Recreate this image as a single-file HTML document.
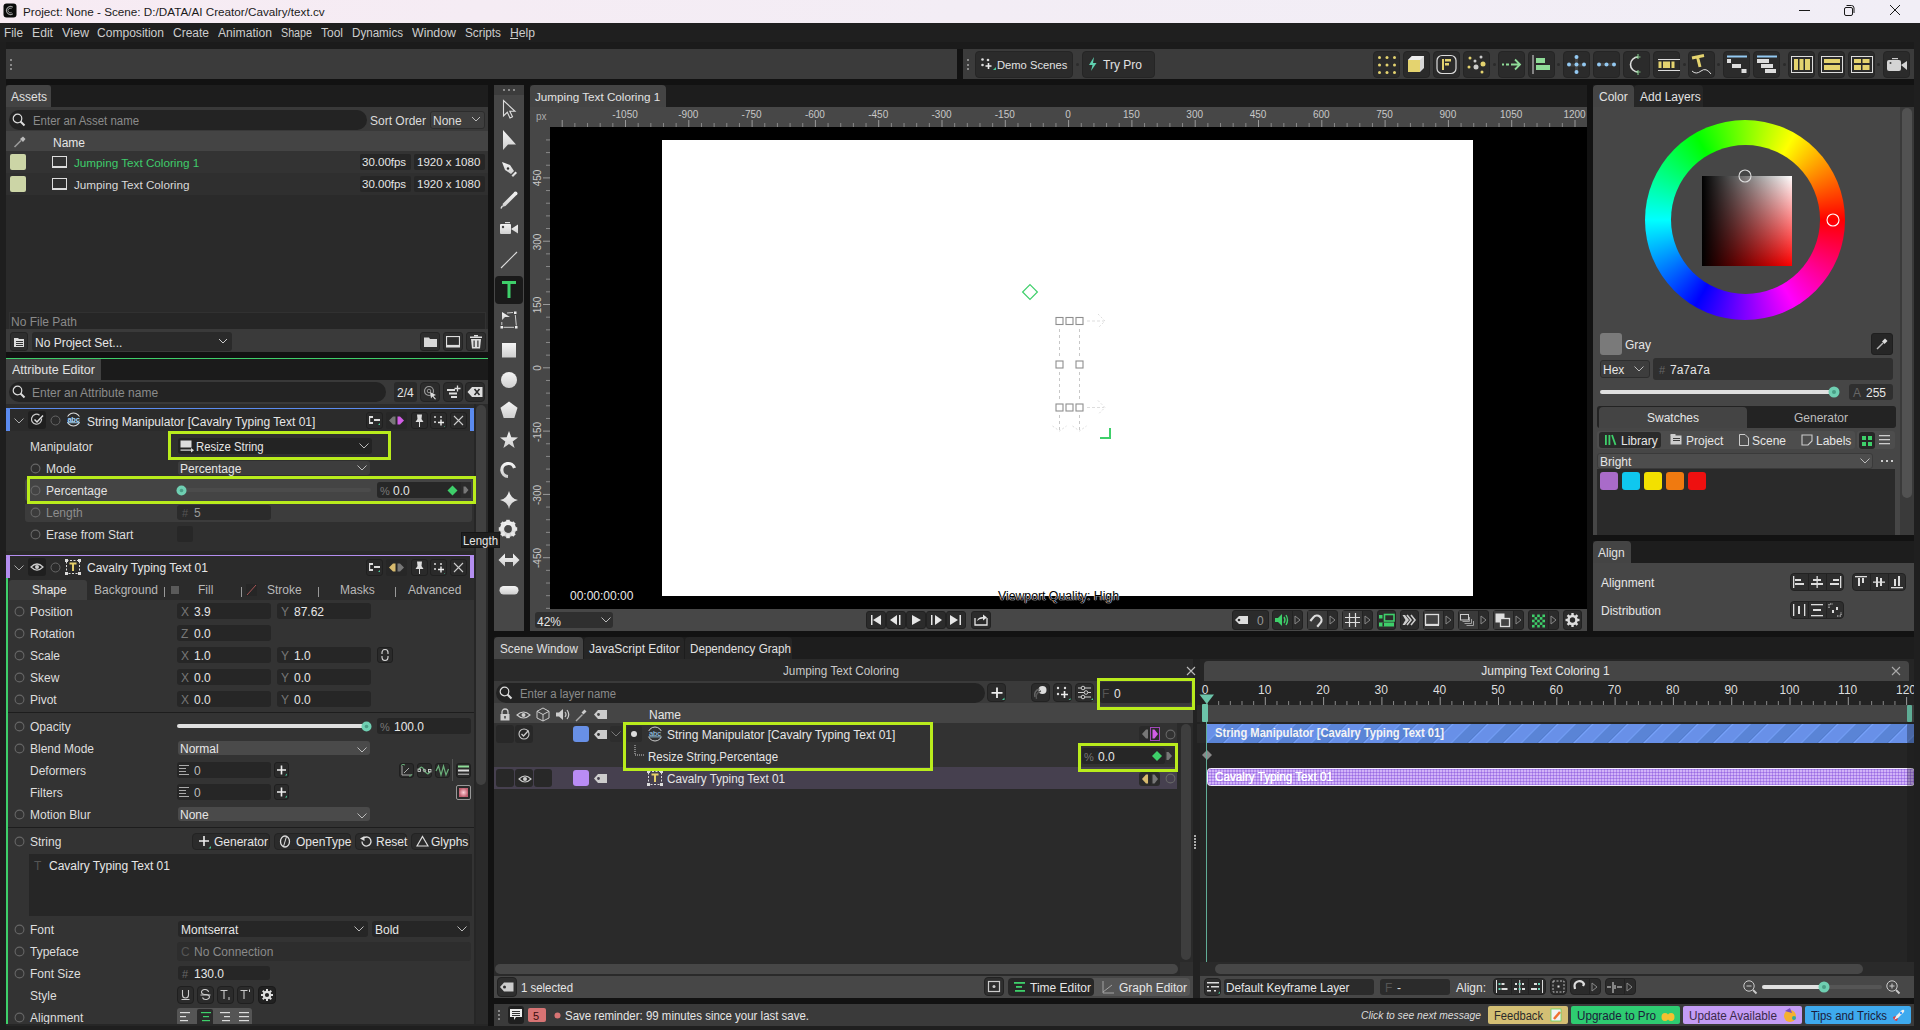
<!DOCTYPE html><html><head><meta charset="utf-8"><style>
*{box-sizing:border-box;margin:0;padding:0}
html,body{width:1920px;height:1030px;overflow:hidden;background:#121212;font-family:"Liberation Sans",sans-serif;font-size:12px;color:#dcdcdc}
.a{position:absolute}
.t{position:absolute;white-space:nowrap}
</style></head><body><div class="a" style="left:0px;top:0px;width:1920px;height:23px;background:linear-gradient(90deg,#f7ebf3 0%,#f3edf5 50%,#f1eef6 100%);"></div>
<svg class="a" style="left:3px;top:3px;" width="14" height="15" viewBox="0 0 14 15"><rect x="0.5" y="0.5" width="13" height="14" rx="3" fill="#0b0b0b"/><path d="M9.8 4.2 A4 4 0 1 0 9.8 10.8" fill="none" stroke="#9a9a9a" stroke-width="1.1"/><path d="M8.6 5.6 A2.3 2.3 0 1 0 8.6 9.4" fill="none" stroke="#9a9a9a" stroke-width="0.9"/></svg>
<div class="t" style="left:23px;top:5px;font-size:11.7px;line-height:13px;color:#1a1a1a;">Project: None - Scene: D:/DATA/AI Creator/Cavalry/text.cv</div>
<div class="a" style="left:1799px;top:10px;width:11px;height:1px;background:#1a1a1a;"></div>
<svg class="a" style="left:1843px;top:4px;" width="13" height="13" viewBox="0 0 13 13"><rect x="1.5" y="3.5" width="8" height="8" rx="1.5" fill="none" stroke="#1a1a1a" stroke-width="1"/><path d="M3.5 1.5 h5 a2.5 2.5 0 0 1 2.5 2.5 v5" fill="none" stroke="#1a1a1a" stroke-width="1"/></svg>
<svg class="a" style="left:1889px;top:4px;" width="12" height="12" viewBox="0 0 12 12"><path d="M1 1 L11 11 M11 1 L1 11" stroke="#1a1a1a" stroke-width="1"/></svg>
<div class="a" style="left:0px;top:23px;width:1920px;height:19px;background:#1f1f1f;"></div>
<div class="a" style="left:0px;top:42px;width:1920px;height:7px;background:#1b1b1b;"></div>
<div class="t" style="left:4px;top:26px;font-size:12px;line-height:14px;color:#cdcdcd;;transform:scaleX(0.9827);transform-origin:0 0">File</div>
<div class="t" style="left:32px;top:26px;font-size:12px;line-height:14px;color:#cdcdcd;;transform:scaleX(1.0156);transform-origin:0 0">Edit</div>
<div class="t" style="left:62px;top:26px;font-size:12px;line-height:14px;color:#cdcdcd;;transform:scaleX(1.0468);transform-origin:0 0">View</div>
<div class="t" style="left:97px;top:26px;font-size:12px;line-height:14px;color:#cdcdcd;;transform:scaleX(1.0046);transform-origin:0 0">Composition</div>
<div class="t" style="left:173px;top:26px;font-size:12px;line-height:14px;color:#cdcdcd;;transform:scaleX(0.9995);transform-origin:0 0">Create</div>
<div class="t" style="left:218px;top:26px;font-size:12px;line-height:14px;color:#cdcdcd;;transform:scaleX(1.0120);transform-origin:0 0">Animation</div>
<div class="t" style="left:281px;top:26px;font-size:12px;line-height:14px;color:#cdcdcd;;transform:scaleX(0.8934);transform-origin:0 0">Shape</div>
<div class="t" style="left:321px;top:26px;font-size:12px;line-height:14px;color:#cdcdcd;;transform:scaleX(0.9994);transform-origin:0 0">Tool</div>
<div class="t" style="left:352px;top:26px;font-size:12px;line-height:14px;color:#cdcdcd;;transform:scaleX(0.9682);transform-origin:0 0">Dynamics</div>
<div class="t" style="left:412px;top:26px;font-size:12px;line-height:14px;color:#cdcdcd;;transform:scaleX(1.0310);transform-origin:0 0">Window</div>
<div class="t" style="left:465px;top:26px;font-size:12px;line-height:14px;color:#cdcdcd;;transform:scaleX(0.9816);transform-origin:0 0">Scripts</div>
<div class="t" style="left:510px;top:26px;font-size:12px;line-height:14px;color:#cdcdcd;;transform:scaleX(1.0130);transform-origin:0 0">Help</div>
<div class="a" style="left:510px;top:38px;width:8px;height:1px;background:#cdcdcd;"></div>
<div class="a" style="left:6px;top:49px;width:951px;height:30px;background:#3b3b3b;"></div>
<div class="a" style="left:963px;top:49px;width:951px;height:30px;background:#3b3b3b;"></div>
<div class="a" style="left:10px;top:59px;width:2px;height:2px;background:#8a8a8a;"></div>
<div class="a" style="left:10px;top:63.5px;width:2px;height:2px;background:#8a8a8a;"></div>
<div class="a" style="left:10px;top:68px;width:2px;height:2px;background:#8a8a8a;"></div>
<div class="a" style="left:967px;top:59px;width:2px;height:2px;background:#8a8a8a;"></div>
<div class="a" style="left:967px;top:63.5px;width:2px;height:2px;background:#8a8a8a;"></div>
<div class="a" style="left:967px;top:68px;width:2px;height:2px;background:#8a8a8a;"></div>
<div class="a" style="left:975px;top:51px;width:98px;height:27px;background:#2b2b2b;border:1px solid #252525;border-radius:4px"></div>
<div class="a" style="left:1082px;top:51px;width:73px;height:27px;background:#2b2b2b;border:1px solid #252525;border-radius:4px"></div>
<div class="a" style="left:1076px;top:63px;width:3px;height:3px;background:#2c2c2c;border-radius:50%"></div>
<svg class="a" style="left:980px;top:57px;" width="16" height="16" viewBox="0 0 16 16"><circle cx="2.5" cy="2.5" r="1.3" fill="#ddd"/><circle cx="8" cy="3" r="1.3" fill="#ddd"/><circle cx="2.5" cy="8" r="1.3" fill="#ddd"/><path d="M8.5 6 v6 M5.5 9 h6" stroke="#eee" stroke-width="1.6"/><path d="M13 13 l3 -3 v3z" fill="#49c99a"/></svg>
<div class="t" style="left:997px;top:59px;font-size:11.2px;line-height:13px;color:#e2e2e2;">Demo Scenes</div>
<svg class="a" style="left:1088px;top:57px;" width="10" height="15" viewBox="0 0 10 15"><path d="M6 0 L1 8 H4.5 L3 14 L8.5 6 H5z" fill="#5fd1b0"/></svg>
<div class="t" style="left:1103px;top:58px;font-size:12px;line-height:14px;color:#e2e2e2;">Try Pro</div>
<div class="a" style="left:1373px;top:51px;width:27px;height:27px;background:#2b2b2b;border:1px solid #252525;border-radius:4px"></div>
<div class="a" style="left:1403px;top:51px;width:27px;height:27px;background:#2b2b2b;border:1px solid #252525;border-radius:4px"></div>
<div class="a" style="left:1433px;top:51px;width:27px;height:27px;background:#2b2b2b;border:1px solid #252525;border-radius:4px"></div>
<div class="a" style="left:1463px;top:51px;width:27px;height:27px;background:#2b2b2b;border:1px solid #252525;border-radius:4px"></div>
<div class="a" style="left:1498px;top:51px;width:27px;height:27px;background:#2b2b2b;border:1px solid #252525;border-radius:4px"></div>
<div class="a" style="left:1528px;top:51px;width:27px;height:27px;background:#2b2b2b;border:1px solid #252525;border-radius:4px"></div>
<div class="a" style="left:1563px;top:51px;width:27px;height:27px;background:#2b2b2b;border:1px solid #252525;border-radius:4px"></div>
<div class="a" style="left:1593px;top:51px;width:27px;height:27px;background:#2b2b2b;border:1px solid #252525;border-radius:4px"></div>
<div class="a" style="left:1623px;top:51px;width:27px;height:27px;background:#2b2b2b;border:1px solid #252525;border-radius:4px"></div>
<div class="a" style="left:1653px;top:51px;width:27px;height:27px;background:#2b2b2b;border:1px solid #252525;border-radius:4px"></div>
<div class="a" style="left:1688px;top:51px;width:27px;height:27px;background:#2b2b2b;border:1px solid #252525;border-radius:4px"></div>
<div class="a" style="left:1723px;top:51px;width:27px;height:27px;background:#2b2b2b;border:1px solid #252525;border-radius:4px"></div>
<div class="a" style="left:1753px;top:51px;width:27px;height:27px;background:#2b2b2b;border:1px solid #252525;border-radius:4px"></div>
<div class="a" style="left:1788px;top:51px;width:27px;height:27px;background:#2b2b2b;border:1px solid #252525;border-radius:4px"></div>
<div class="a" style="left:1818px;top:51px;width:27px;height:27px;background:#2b2b2b;border:1px solid #252525;border-radius:4px"></div>
<div class="a" style="left:1848px;top:51px;width:27px;height:27px;background:#2b2b2b;border:1px solid #252525;border-radius:4px"></div>
<div class="a" style="left:1883px;top:51px;width:27px;height:27px;background:#2b2b2b;border:1px solid #252525;border-radius:4px"></div>
<div class="a" style="left:1493px;top:63px;width:3px;height:3px;background:#2a2a2a;border-radius:50%"></div>
<div class="a" style="left:1557px;top:63px;width:3px;height:3px;background:#2a2a2a;border-radius:50%"></div>
<div class="a" style="left:1683px;top:63px;width:3px;height:3px;background:#2a2a2a;border-radius:50%"></div>
<div class="a" style="left:1717px;top:63px;width:3px;height:3px;background:#2a2a2a;border-radius:50%"></div>
<div class="a" style="left:1783px;top:63px;width:3px;height:3px;background:#2a2a2a;border-radius:50%"></div>
<div class="a" style="left:1877px;top:63px;width:3px;height:3px;background:#2a2a2a;border-radius:50%"></div>
<svg class="a" style="left:1373px;top:51px;" width="27" height="27" viewBox="0 0 27 27"><circle cx="6.5" cy="6.5" r="1.5" fill="#e4d36f"/><circle cx="6.5" cy="14.0" r="1.5" fill="#e4d36f"/><circle cx="6.5" cy="21.5" r="1.5" fill="#e4d36f"/><circle cx="14.0" cy="6.5" r="1.5" fill="#e4d36f"/><circle cx="14.0" cy="14.0" r="1.5" fill="#e4d36f"/><circle cx="14.0" cy="21.5" r="1.5" fill="#e4d36f"/><circle cx="21.5" cy="6.5" r="1.5" fill="#e4d36f"/><circle cx="21.5" cy="14.0" r="1.5" fill="#e4d36f"/><circle cx="21.5" cy="21.5" r="1.5" fill="#e4d36f"/></svg>
<svg class="a" style="left:1403px;top:51px;" width="27" height="27" viewBox="0 0 27 27"><path d="M5 9 L9 5 H21 V17 L17 21 H5z" fill="#d8d8d8"/><rect x="5" y="9" width="12" height="12" fill="#e4d36f"/><path d="M5 9 L9 5 H21 L17 9z" fill="#eee"/></svg>
<svg class="a" style="left:1433px;top:51px;" width="27" height="27" viewBox="0 0 27 27"><rect x="4" y="4.5" width="19" height="18" rx="5" fill="none" stroke="#ddd" stroke-width="1.2"/><rect x="9" y="8" width="2" height="11" fill="#e4d36f"/><rect x="12" y="8" width="6" height="2.5" fill="#e4d36f"/><rect x="12" y="12" width="4" height="2.5" fill="#e4d36f"/></svg>
<svg class="a" style="left:1463px;top:51px;" width="27" height="27" viewBox="0 0 27 27"><circle cx="7" cy="7" r="1.5" fill="#e4d36f"/><circle cx="18" cy="6" r="1.5" fill="#ccc"/><circle cx="12" cy="10" r="1.5" fill="#ccc"/><circle cx="20" cy="13" r="2.5" fill="#e4d36f"/><circle cx="13" cy="16" r="2.5" fill="#ccc"/><circle cx="6" cy="16" r="1.5" fill="#e4d36f"/><circle cx="19" cy="21" r="1.5" fill="#e4d36f"/></svg>
<svg class="a" style="left:1498px;top:51px;" width="27" height="27" viewBox="0 0 27 27"><path d="M4 13.5 h2 M8 13.5 h3 M13 13.5 h8 M17 8.5 l5 5 -5 5" stroke="#8fdc98" stroke-width="1.8" fill="none"/></svg>
<svg class="a" style="left:1528px;top:51px;" width="27" height="27" viewBox="0 0 27 27"><rect x="4.5" y="4" width="1" height="19" fill="#ddd"/><rect x="8" y="7" width="9" height="5" fill="#8fdc98"/><rect x="8" y="14" width="14" height="5" fill="#8fdc98"/></svg>
<svg class="a" style="left:1563px;top:51px;" width="27" height="27" viewBox="0 0 27 27"><rect x="7" y="12.5" width="13" height="3" fill="#444"/><rect x="12" y="7" width="3" height="13" fill="#444"/><circle cx="13.5" cy="6" r="2" fill="#93c9f2"/><circle cx="6" cy="13.5" r="2" fill="#93c9f2"/><circle cx="13.5" cy="13.5" r="2" fill="#93c9f2"/><circle cx="21" cy="13.5" r="2" fill="#93c9f2"/><circle cx="13.5" cy="21" r="2" fill="#93c9f2"/></svg>
<svg class="a" style="left:1593px;top:51px;" width="27" height="27" viewBox="0 0 27 27"><rect x="6" y="12" width="15" height="3" fill="#444"/><circle cx="6" cy="13.5" r="2" fill="#93c9f2"/><circle cx="13.5" cy="13.5" r="2" fill="#93c9f2"/><circle cx="21" cy="13.5" r="2" fill="#93c9f2"/></svg>
<svg class="a" style="left:1623px;top:51px;" width="27" height="27" viewBox="0 0 27 27"><path d="M15 6 A7.5 7.5 0 0 0 15 21" stroke="#ddd" stroke-width="1.6" fill="none"/><path d="M15 3 v5 M12.5 6 h5 M15 19 v5 M12.5 21 h5" stroke="#8fdc98" stroke-width="1.2" opacity="0.8"/></svg>
<svg class="a" style="left:1653px;top:51px;" width="27" height="27" viewBox="0 0 27 27"><rect x="5" y="8" width="22" height="1" fill="#ddd"/><rect x="5" y="19" width="22" height="1" fill="#ddd"/><rect x="5.5" y="10.5" width="3" height="6.5" fill="#e4d36f"/><rect x="10" y="10.5" width="7" height="6.5" fill="#e4d36f"/><rect x="18.5" y="10.5" width="3" height="6.5" fill="#e4d36f"/></svg>
<svg class="a" style="left:1688px;top:51px;" width="27" height="27" viewBox="0 0 27 27"><path d="M4 7 L16 4.5 M9.5 6 L12 16" stroke="#e4d36f" stroke-width="3" fill="none"/><path d="M4 20 q4 4 9 0 t10 3" stroke="#ddd" stroke-width="1" fill="none"/></svg>
<svg class="a" style="left:1723px;top:51px;" width="27" height="27" viewBox="0 0 27 27"><rect x="4" y="4.5" width="20" height="2" fill="#93c9f2"/><rect x="4" y="8" width="4" height="4" fill="#ddd"/><rect x="9" y="13" width="9" height="4" fill="#ddd"/><rect x="18.5" y="18" width="5" height="4" fill="#ddd"/></svg>
<svg class="a" style="left:1753px;top:51px;" width="27" height="27" viewBox="0 0 27 27"><rect x="4" y="4.5" width="20" height="2" fill="#93c9f2"/><rect x="4" y="8" width="12" height="4" fill="#ddd"/><rect x="8" y="13" width="12" height="4" fill="#ddd"/><rect x="12" y="18" width="11" height="4" fill="#ddd"/></svg>
<svg class="a" style="left:1788px;top:51px;" width="27" height="27" viewBox="0 0 27 27"><rect x="3.5" y="5.5" width="21" height="16" fill="none" stroke="#ddd" stroke-width="1"/><rect x="6" y="8" width="4" height="11" fill="#e4d36f"/><rect x="11.5" y="8" width="4" height="11" fill="#e4d36f"/><rect x="17" y="8" width="5" height="11" fill="#e4d36f"/></svg>
<svg class="a" style="left:1818px;top:51px;" width="27" height="27" viewBox="0 0 27 27"><rect x="3.5" y="5.5" width="21" height="16" fill="none" stroke="#ddd" stroke-width="1"/><rect x="6" y="8" width="16" height="4" fill="#e4d36f"/><rect x="6" y="14" width="16" height="5" fill="#e4d36f"/></svg>
<svg class="a" style="left:1848px;top:51px;" width="27" height="27" viewBox="0 0 27 27"><rect x="3.5" y="5.5" width="21" height="16" fill="none" stroke="#ddd" stroke-width="1"/><rect x="6" y="8" width="7" height="4" fill="#e4d36f"/><rect x="14.5" y="8" width="7" height="4" fill="#e4d36f"/><rect x="6" y="14" width="7" height="5" fill="#e4d36f"/><rect x="14.5" y="14" width="7" height="5" fill="#e4d36f"/></svg>
<svg class="a" style="left:1883px;top:51px;" width="27" height="27" viewBox="0 0 27 27"><rect x="9" y="7" width="6" height="1.2" fill="#ccc"/><rect x="4" y="9" width="14" height="11" rx="2" fill="#d4d4d4"/><path d="M18 14 L24 10 V19z" fill="#d4d4d4"/><circle cx="7.5" cy="12" r="1" fill="#444"/></svg>
<div class="a" style="left:6px;top:85px;width:482px;height:22px;background:#1d1d1d;"></div>
<div class="a" style="left:6px;top:85px;width:45px;height:22px;background:#434343;border-radius:3px 3px 0 0"></div>
<div class="t" style="left:11px;top:90px;font-size:12px;line-height:14px;color:#e0e0e0;">Assets</div>
<div class="a" style="left:6px;top:107px;width:482px;height:24px;background:#393939;"></div>
<div class="a" style="left:9px;top:110px;width:358px;height:20px;background:#232323;border-radius:10px"></div>
<svg class="a" style="left:12px;top:113px;" width="14" height="14" viewBox="0 0 14 14"><circle cx="5.5" cy="5.5" r="4.3" fill="none" stroke="#ddd" stroke-width="1.2"/><path d="M8.5 8.5 L12.5 12.5" stroke="#ddd" stroke-width="2"/></svg>
<div class="t" style="left:33px;top:114px;font-size:12px;line-height:14px;color:#8b8b8b;;transform:scaleX(0.9515);transform-origin:0 0">Enter an Asset name</div>
<div class="t" style="left:370px;top:114px;font-size:12px;line-height:14px;color:#dcdcdc;">Sort Order</div>
<div class="a" style="left:430px;top:111px;width:55px;height:18px;background:#3e3e3e;border:1px solid #2c2c2c;border-radius:3px"></div>
<div class="t" style="left:433px;top:114px;font-size:12px;line-height:14px;color:#dcdcdc;">None</div>
<svg class="a" style="left:471px;top:116px;" width="10" height="7" viewBox="0 0 10 7"><path d="M1 1 L5 5 L9 1" stroke="#bbb" fill="none" stroke-width="1"/></svg>
<div class="a" style="left:6px;top:131px;width:482px;height:20px;background:#444;"></div>
<svg class="a" style="left:13px;top:136px;" width="13" height="12" viewBox="0 0 13 12"><path d="M1.5 11 L8 4.5" stroke="#9a9a9a" stroke-width="1.6"/><path d="M7 3 L10 0.5 L12.5 3 L10 6z" fill="#bbb"/></svg>
<div class="t" style="left:53px;top:136px;font-size:12px;line-height:14px;color:#e6e6e6;">Name</div>
<div class="a" style="left:6px;top:151px;width:482px;height:22px;background:#333;"></div>
<div class="a" style="left:10px;top:154px;width:16px;height:16px;background:#ccd5a6;border-radius:2px"></div>
<svg class="a" style="left:52px;top:156px;" width="15" height="13" viewBox="0 0 15 13"><rect x="0.5" y="0.5" width="14" height="10" fill="none" stroke="#ddd" stroke-width="1"/><rect x="0" y="10" width="15" height="2" fill="#ddd"/></svg>
<div class="t" style="left:74px;top:156px;font-size:11.7px;line-height:13px;color:#3fcb6b;">Jumping Text Coloring 1</div>
<div class="a" style="left:360px;top:154px;width:51px;height:16px;background:#262626;border-radius:2px"></div>
<div class="t" style="left:362px;top:156px;font-size:11.5px;line-height:13px;color:#e6e6e6;">30.00fps</div>
<div class="a" style="left:414px;top:154px;width:71px;height:16px;background:#262626;border-radius:2px"></div>
<div class="t" style="left:417px;top:156px;font-size:11.5px;line-height:13px;color:#e6e6e6;">1920 x 1080</div>
<div class="a" style="left:6px;top:173px;width:482px;height:22px;background:#2f2f2f;"></div>
<div class="a" style="left:10px;top:176px;width:16px;height:16px;background:#ccd5a6;border-radius:2px"></div>
<svg class="a" style="left:52px;top:178px;" width="15" height="13" viewBox="0 0 15 13"><rect x="0.5" y="0.5" width="14" height="10" fill="none" stroke="#ddd" stroke-width="1"/><rect x="0" y="10" width="15" height="2" fill="#ddd"/></svg>
<div class="t" style="left:74px;top:178px;font-size:11.7px;line-height:13px;color:#d9d9d9;">Jumping Text Coloring</div>
<div class="a" style="left:360px;top:176px;width:51px;height:16px;background:#262626;border-radius:2px"></div>
<div class="t" style="left:362px;top:178px;font-size:11.5px;line-height:13px;color:#e6e6e6;">30.00fps</div>
<div class="a" style="left:414px;top:176px;width:71px;height:16px;background:#262626;border-radius:2px"></div>
<div class="t" style="left:417px;top:178px;font-size:11.5px;line-height:13px;color:#e6e6e6;">1920 x 1080</div>
<div class="a" style="left:6px;top:195px;width:482px;height:157px;background:#2a2a2a;"></div>
<div class="a" style="left:9px;top:312px;width:477px;height:17px;background:#262626;border:1px solid #313131;border-bottom:none"></div>
<div class="t" style="left:11px;top:315px;font-size:12px;line-height:14px;color:#8a8a8a;">No File Path</div>
<div class="a" style="left:6px;top:329px;width:482px;height:23px;background:#3a3a3a;"></div>
<div class="a" style="left:10px;top:332px;width:18px;height:19px;background:#2e2e2e;border:1px solid #242424;border-radius:3px"></div>
<svg class="a" style="left:13px;top:336px;" width="13" height="12" viewBox="0 0 13 12"><path d="M1 2 h4 l1 1 h5 v8 h-10z" fill="#ddd"/><rect x="3" y="5" width="7" height="1" fill="#333"/><rect x="3" y="7" width="7" height="1" fill="#333"/><rect x="3" y="9" width="7" height="1" fill="#333"/></svg>
<div class="a" style="left:32px;top:332px;width:200px;height:19px;background:#2a2a2a;border-radius:3px"></div>
<div class="t" style="left:35px;top:336px;font-size:12px;line-height:14px;color:#e6e6e6;">No Project Set...</div>
<svg class="a" style="left:218px;top:338px;" width="10" height="7" viewBox="0 0 10 7"><path d="M1 1 L5 5 L9 1" stroke="#ccc" fill="none" stroke-width="1"/></svg>
<div class="a" style="left:420px;top:332px;width:20px;height:19px;background:#2e2e2e;border:1px solid #242424;border-radius:3px"></div>
<div class="a" style="left:443px;top:332px;width:20px;height:19px;background:#2e2e2e;border:1px solid #242424;border-radius:3px"></div>
<div class="a" style="left:466px;top:332px;width:20px;height:19px;background:#2e2e2e;border:1px solid #242424;border-radius:3px"></div>
<svg class="a" style="left:424px;top:336px;" width="13" height="11" viewBox="0 0 13 11"><path d="M0 1.5 h5 l1 1.5 h7 v8 h-13z" fill="#d8d8d8"/></svg>
<svg class="a" style="left:446px;top:336px;" width="14" height="12" viewBox="0 0 14 12"><rect x="0.5" y="0.5" width="13" height="9" fill="none" stroke="#ddd" stroke-width="1.2"/><rect x="0" y="9.5" width="14" height="2" fill="#ddd"/></svg>
<svg class="a" style="left:470px;top:335px;" width="12" height="14" viewBox="0 0 12 14"><rect x="0" y="1.5" width="12" height="1.5" fill="#ddd"/><rect x="4" y="0" width="4" height="1.5" fill="#ddd"/><path d="M1 4 h10 l-1 9.5 h-8z" fill="#ddd"/><rect x="3.5" y="5.5" width="1.2" height="6.5" fill="#333"/><rect x="7.3" y="5.5" width="1.2" height="6.5" fill="#333"/></svg>
<div class="a" style="left:6px;top:352px;width:482px;height:6px;background:#121212;"></div>
<div class="a" style="left:6px;top:358px;width:482px;height:1px;background:#3ecf6a;"></div>
<div class="a" style="left:6px;top:359px;width:482px;height:21px;background:#1b1b1b;"></div>
<div class="a" style="left:6px;top:359px;width:95px;height:21px;background:#414141;"></div>
<div class="t" style="left:12px;top:363px;font-size:12px;line-height:14px;color:#e2e2e2;;transform:scaleX(1.0457);transform-origin:0 0">Attribute Editor</div>
<div class="a" style="left:6px;top:380px;width:482px;height:24px;background:#393939;"></div>
<div class="a" style="left:9px;top:382px;width:377px;height:20px;background:#232323;border-radius:10px"></div>
<svg class="a" style="left:12px;top:385px;" width="14" height="14" viewBox="0 0 14 14"><circle cx="5.5" cy="5.5" r="4.3" fill="none" stroke="#ddd" stroke-width="1.2"/><path d="M8.5 8.5 L12.5 12.5" stroke="#ddd" stroke-width="2"/></svg>
<div class="t" style="left:32px;top:386px;font-size:12px;line-height:14px;color:#8b8b8b;">Enter an Attribute name</div>
<div class="a" style="left:394px;top:382px;width:23px;height:20px;background:#2a2a2a;border-radius:3px"></div>
<div class="t" style="left:397px;top:386px;font-size:12px;line-height:14px;color:#e6e6e6;">2/4</div>
<div class="a" style="left:420px;top:382px;width:20px;height:20px;background:#2c2c2c;border:1px solid #232323;border-radius:4px"></div>
<div class="a" style="left:443px;top:382px;width:20px;height:20px;background:#2c2c2c;border:1px solid #232323;border-radius:4px"></div>
<div class="a" style="left:465px;top:382px;width:20px;height:20px;background:#2c2c2c;border:1px solid #232323;border-radius:4px"></div>
<svg class="a" style="left:423px;top:385px;" width="15" height="15" viewBox="0 0 15 15"><circle cx="6" cy="6" r="4.5" fill="none" stroke="#999" stroke-width="1.2"/><circle cx="6" cy="6" r="1.8" fill="none" stroke="#999" stroke-width="1"/><path d="M7 7 L13 10 L10.5 11 L13 14 L12 14.5 L9.5 11.5 L8 13.5z" fill="#ddd"/></svg>
<svg class="a" style="left:446px;top:385px;" width="15" height="14" viewBox="0 0 15 14"><rect x="1" y="4" width="8" height="2" fill="#ddd"/><rect x="3" y="7.5" width="8" height="2" fill="#ddd"/><rect x="5" y="11" width="6" height="2" fill="#ddd"/><path d="M11.5 0.5 v6 M8.5 3.5 h6" stroke="#ddd" stroke-width="1.3"/></svg>
<svg class="a" style="left:467px;top:386px;" width="16" height="12" viewBox="0 0 16 12"><path d="M0.5 6 L5 1 H15.5 V11 H5z" fill="#ddd"/><path d="M7.5 3 L12.5 9 M12.5 3 L7.5 9" stroke="#2c2c2c" stroke-width="1.6"/></svg>
<div class="a" style="left:6px;top:404px;width:470px;height:620px;background:#2c2c2c;"></div>
<div class="a" style="left:476px;top:404px;width:12px;height:620px;background:#2a2a2a;"></div>
<div class="a" style="left:476px;top:405px;width:10px;height:380px;background:#404040;border-radius:5px"></div>
<div class="a" style="left:474px;top:404px;width:2px;height:620px;background:#262626;"></div>
<div class="a" style="left:6px;top:408px;width:468px;height:143px;background:#2f2f2f;"></div>
<div class="a" style="left:6px;top:408px;width:468px;height:1.5px;background:#5b8bef;"></div>
<div class="a" style="left:6px;top:408px;width:4px;height:23px;background:#5b8bef;border-radius:3px 0 0 0"></div>
<div class="a" style="left:470px;top:408px;width:4px;height:23px;background:#5b8bef;border-radius:0 3px 0 0"></div>
<div class="a" style="left:10px;top:409px;width:460px;height:22px;background:#2b2b2b;"></div>
<svg class="a" style="left:14px;top:418px;" width="10" height="6" viewBox="0 0 10 6"><path d="M0.5 0.5 L5 5 L9.5 0.5" stroke="#aaa" fill="none" stroke-width="1"/></svg>
<div class="a" style="left:28px;top:411px;width:18px;height:18px;background:#1f1f1f;border-radius:3px"></div>
<svg class="a" style="left:31px;top:413px;" width="13" height="13" viewBox="0 0 13 13"><path d="M10.5 5.5 A5 5 0 1 1 8.5 2.2" fill="none" stroke="#ccc" stroke-width="1.2"/><path d="M3.5 6.5 L6 9 L12 2.5" fill="none" stroke="#ddd" stroke-width="1.5"/></svg>
<svg class="a" style="left:50px;top:415px;" width="11" height="11" viewBox="0 0 11 11"><circle cx="5.5" cy="5.5" r="4.5" fill="none" stroke="#666" stroke-width="1"/></svg>
<div class="t" style="left:87px;top:415px;font-size:12px;line-height:14px;color:#e6e6e6;">String Manipulator [Cavalry Typing Text 01]</div>
<div class="a" style="left:366px;top:412px;width:17px;height:17px;background:#2a2a2a;border:1px solid #202020;border-radius:3px"></div>
<svg class="a" style="left:368px;top:415px;" width="13" height="11" viewBox="0 0 13 11"><rect x="1" y="1" width="4" height="2" fill="#ddd"/><rect x="1" y="7" width="4" height="2" fill="#ddd"/><rect x="1" y="1" width="1.2" height="8" fill="#ddd"/><rect x="6" y="4" width="6" height="2" fill="#ddd"/><path d="M10 10 l2 -2 v2z" fill="#49c99a"/></svg>
<div class="a" style="left:386px;top:412px;width:21px;height:17px;background:#272727;border-radius:3px"></div>
<svg class="a" style="left:387px;top:416px;" width="19" height="9" viewBox="0 0 19 9"><path d="M6 0.5 L2 4.5 L6 8.5 H8.5 V0.5z" fill="#777"/><path d="M13 0.5 H10.5 V8.5 H13 L17 4.5z" fill="#d25ee6"/></svg>
<div class="a" style="left:411px;top:412px;width:17px;height:17px;background:#2a2a2a;border:1px solid #202020;border-radius:3px"></div>
<svg class="a" style="left:413px;top:414px;" width="13" height="13" viewBox="0 0 13 13"><path d="M4 0.5 H9 L8.5 5 L10.5 8 H2.5 L4.5 5z" fill="#ddd"/><rect x="6" y="8" width="1" height="5" fill="#ddd"/></svg>
<div class="a" style="left:430px;top:412px;width:17px;height:17px;background:#2a2a2a;border:1px solid #202020;border-radius:3px"></div>
<svg class="a" style="left:432px;top:414px;" width="13" height="13" viewBox="0 0 13 13"><circle cx="3" cy="3" r="1" fill="#ddd"/><circle cx="9" cy="3" r="1" fill="#ddd"/><circle cx="3" cy="8" r="1" fill="#ddd"/><path d="M9 5.5 v6 M6 8.5 h6" stroke="#eee" stroke-width="1.4"/><path d="M12 13 l2 -2 v2z" fill="#49c99a"/></svg>
<div class="a" style="left:450px;top:412px;width:17px;height:17px;background:#2a2a2a;border:1px solid #202020;border-radius:3px"></div>
<svg class="a" style="left:453px;top:415px;" width="11" height="11" viewBox="0 0 11 11"><path d="M1 1 L10 10 M10 1 L1 10" stroke="#ccc" stroke-width="1.1"/></svg>
<svg class="a" style="left:66px;top:412px;" width="15" height="15" viewBox="0 0 15 15"><circle cx="7.5" cy="7.5" r="6.5" fill="none" stroke="#ddd" stroke-width="1.1"/><rect x="0" y="4.5" width="15" height="6" fill="#2b2b2b"/><text x="7.5" y="10" font-size="7.5" font-weight="bold" font-family="Liberation Sans" fill="#a8dbff" text-anchor="middle" letter-spacing="-0.3">abc</text><rect x="1" y="10.3" width="13" height="0.9" fill="#a8dbff"/></svg>
<div class="t" style="left:30px;top:440px;font-size:12px;line-height:14px;color:#dedede;">Manipulator</div>
<div class="a" style="left:178px;top:438px;width:194px;height:16px;background:#232323;border-radius:3px"></div>
<svg class="a" style="left:180px;top:440px;" width="14" height="13" viewBox="0 0 14 13"><rect x="0.5" y="0.5" width="11" height="7" fill="#ddd"/><rect x="0.5" y="9.5" width="11" height="1.2" fill="#ddd"/><path d="M11 8 l3 2.2 -3 2.2z" fill="#ddd"/></svg>
<div class="t" style="left:196px;top:440px;font-size:12px;line-height:14px;color:#e6e6e6;;transform:scaleX(0.9473);transform-origin:0 0">Resize String</div>
<svg class="a" style="left:359px;top:443px;" width="10" height="6" viewBox="0 0 10 6"><path d="M0.5 0.5 L5 5 L9.5 0.5" stroke="#bbb" fill="none" stroke-width="1"/></svg>
<div class="a" style="left:168px;top:431px;width:223px;height:29px;background:transparent;border:3px solid #b9ec1c"></div>
<svg class="a" style="left:30px;top:463px;" width="11" height="11" viewBox="0 0 11 11"><circle cx="5.5" cy="5.5" r="4.4" fill="none" stroke="#666" stroke-width="1.1"/></svg>
<div class="t" style="left:46px;top:462px;font-size:12px;line-height:14px;color:#dedede;">Mode</div>
<div class="a" style="left:178px;top:461px;width:192px;height:14px;background:#3d3d3d;border-radius:3px"></div>
<div class="t" style="left:180px;top:462px;font-size:12px;line-height:14px;color:#e6e6e6;">Percentage</div>
<svg class="a" style="left:357px;top:465px;" width="10" height="6" viewBox="0 0 10 6"><path d="M0.5 0.5 L5 5 L9.5 0.5" stroke="#bbb" fill="none" stroke-width="1"/></svg>
<div class="a" style="left:25px;top:479px;width:449px;height:22px;background:#444;border-radius:3px"></div>
<div class="a" style="left:27px;top:476px;width:449px;height:28px;background:transparent;border:3px solid #b9ec1c"></div>
<svg class="a" style="left:30px;top:485px;" width="11" height="11" viewBox="0 0 11 11"><circle cx="5.5" cy="5.5" r="4.4" fill="none" stroke="#666" stroke-width="1.1"/></svg>
<div class="t" style="left:46px;top:484px;font-size:12px;line-height:14px;color:#e2e2e2;">Percentage</div>
<div class="a" style="left:182px;top:488px;width:189px;height:4px;background:#4b4b4b;border-radius:2px"></div>
<svg class="a" style="left:176px;top:485px;" width="11" height="11" viewBox="0 0 11 11"><circle cx="5.5" cy="5.5" r="5" fill="#6fcfb2"/><circle cx="5.5" cy="5.5" r="1.8" fill="#4a9e86"/></svg>
<div class="a" style="left:377px;top:482px;width:94px;height:16px;background:#272727;border-radius:3px"></div>
<div class="t" style="left:380px;top:485px;font-size:11px;line-height:13px;color:#777;">%</div>
<div class="t" style="left:393px;top:484px;font-size:12px;line-height:14px;color:#e6e6e6;">0.0</div>
<svg class="a" style="left:447px;top:485px;" width="11" height="11" viewBox="0 0 11 11"><path d="M5.5 0.5 L10.5 5.5 L5.5 10.5 L0.5 5.5z" fill="#3ecf6a"/></svg>
<div class="a" style="left:461px;top:482px;width:10px;height:16px;background:#2b2b2b;"></div>
<svg class="a" style="left:463px;top:486px;" width="6" height="8" viewBox="0 0 6 8"><path d="M0.5 0.5 H2.5 L5.5 4 L2.5 7.5 H0.5z" fill="#777"/></svg>
<div class="a" style="left:25px;top:504px;width:447px;height:18px;background:#3c3c3c;border-radius:0 0 3px 3px"></div>
<svg class="a" style="left:30px;top:507px;" width="11" height="11" viewBox="0 0 11 11"><circle cx="5.5" cy="5.5" r="4.4" fill="none" stroke="#666" stroke-width="1.1"/></svg>
<div class="t" style="left:46px;top:506px;font-size:12px;line-height:14px;color:#8c8c8c;">Length</div>
<div class="a" style="left:177px;top:505px;width:94px;height:15px;background:#2b2b2b;border-radius:3px"></div>
<div class="t" style="left:182px;top:507px;font-size:11px;line-height:13px;color:#555;">#</div>
<div class="t" style="left:194px;top:506px;font-size:12px;line-height:14px;color:#9a9a9a;">5</div>
<svg class="a" style="left:30px;top:529px;" width="11" height="11" viewBox="0 0 11 11"><circle cx="5.5" cy="5.5" r="4.4" fill="none" stroke="#666" stroke-width="1.1"/></svg>
<div class="t" style="left:46px;top:528px;font-size:12px;line-height:14px;color:#dedede;">Erase from Start</div>
<div class="a" style="left:177px;top:526px;width:16px;height:16px;background:#272727;border-radius:2px"></div>
<div class="a" style="left:6px;top:551px;width:468px;height:4px;background:#2a2a2a;"></div>
<div class="a" style="left:6px;top:555px;width:468px;height:1.5px;background:#b48ef0;"></div>
<div class="a" style="left:6px;top:555px;width:4px;height:23px;background:#b48ef0;border-radius:3px 0 0 0"></div>
<div class="a" style="left:470px;top:555px;width:4px;height:23px;background:#b48ef0;border-radius:0 3px 0 0"></div>
<div class="a" style="left:10px;top:556px;width:460px;height:22px;background:#2b2b2b;"></div>
<svg class="a" style="left:14px;top:565px;" width="10" height="6" viewBox="0 0 10 6"><path d="M0.5 0.5 L5 5 L9.5 0.5" stroke="#aaa" fill="none" stroke-width="1"/></svg>
<div class="a" style="left:28px;top:558px;width:18px;height:18px;background:#1f1f1f;border-radius:3px"></div>
<svg class="a" style="left:30px;top:562px;" width="14" height="10" viewBox="0 0 14 10"><path d="M1 5 Q7 -1 13 5 Q7 11 1 5z" fill="none" stroke="#ccc" stroke-width="1.2"/><circle cx="7" cy="5" r="2" fill="#ccc"/></svg>
<svg class="a" style="left:50px;top:562px;" width="11" height="11" viewBox="0 0 11 11"><circle cx="5.5" cy="5.5" r="4.5" fill="none" stroke="#666" stroke-width="1"/></svg>
<div class="t" style="left:87px;top:561px;font-size:12px;line-height:14px;color:#e6e6e6;">Cavalry Typing Text 01</div>
<div class="a" style="left:366px;top:559px;width:17px;height:17px;background:#2a2a2a;border:1px solid #202020;border-radius:3px"></div>
<svg class="a" style="left:368px;top:562px;" width="13" height="11" viewBox="0 0 13 11"><rect x="1" y="1" width="4" height="2" fill="#ddd"/><rect x="1" y="7" width="4" height="2" fill="#ddd"/><rect x="1" y="1" width="1.2" height="8" fill="#ddd"/><rect x="6" y="4" width="6" height="2" fill="#ddd"/><path d="M10 10 l2 -2 v2z" fill="#49c99a"/></svg>
<div class="a" style="left:386px;top:559px;width:21px;height:17px;background:#272727;border-radius:3px"></div>
<svg class="a" style="left:387px;top:563px;" width="19" height="9" viewBox="0 0 19 9"><path d="M6 0.5 L2 4.5 L6 8.5 H8.5 V0.5z" fill="#d8bb6e"/><path d="M13 0.5 H10.5 V8.5 H13 L17 4.5z" fill="#777"/></svg>
<div class="a" style="left:411px;top:559px;width:17px;height:17px;background:#2a2a2a;border:1px solid #202020;border-radius:3px"></div>
<svg class="a" style="left:413px;top:561px;" width="13" height="13" viewBox="0 0 13 13"><path d="M4 0.5 H9 L8.5 5 L10.5 8 H2.5 L4.5 5z" fill="#ddd"/><rect x="6" y="8" width="1" height="5" fill="#ddd"/></svg>
<div class="a" style="left:430px;top:559px;width:17px;height:17px;background:#2a2a2a;border:1px solid #202020;border-radius:3px"></div>
<svg class="a" style="left:432px;top:561px;" width="13" height="13" viewBox="0 0 13 13"><circle cx="3" cy="3" r="1" fill="#ddd"/><circle cx="9" cy="3" r="1" fill="#ddd"/><circle cx="3" cy="8" r="1" fill="#ddd"/><path d="M9 5.5 v6 M6 8.5 h6" stroke="#eee" stroke-width="1.4"/><path d="M12 13 l2 -2 v2z" fill="#49c99a"/></svg>
<div class="a" style="left:450px;top:559px;width:17px;height:17px;background:#2a2a2a;border:1px solid #202020;border-radius:3px"></div>
<svg class="a" style="left:453px;top:562px;" width="11" height="11" viewBox="0 0 11 11"><path d="M1 1 L10 10 M10 1 L1 10" stroke="#ccc" stroke-width="1.1"/></svg>
<svg class="a" style="left:65px;top:559px;" width="16" height="16" viewBox="0 0 16 16"><rect x="1.5" y="1.5" width="13" height="13" fill="none" stroke="#ddd" stroke-width="1" stroke-dasharray="2 1.5"/><rect x="0" y="0" width="3" height="3" fill="#ddd"/><rect x="13" y="0" width="3" height="3" fill="#ddd"/><rect x="0" y="13" width="3" height="3" fill="#ddd"/><rect x="13" y="13" width="3" height="3" fill="#ddd"/><path d="M4.5 4.5 H11.5 M8 4.5 V12" stroke="#e5cf6a" stroke-width="2"/></svg>
<div class="a" style="left:6px;top:578px;width:1.5px;height:446px;background:#3ecf6a;"></div>
<div class="a" style="left:7.5px;top:578px;width:466.5px;height:446px;background:#333;"></div>
<div class="a" style="left:7.5px;top:578px;width:466.5px;height:22px;background:#2b2b2b;"></div>
<div class="a" style="left:9px;top:580px;width:78px;height:20px;background:#3d3d3d;border-radius:3px 3px 0 0"></div>
<div class="t" style="left:32px;top:583px;font-size:12px;line-height:14px;color:#e6e6e6;">Shape</div>
<div class="t" style="left:94px;top:583px;font-size:12px;line-height:14px;color:#b8b8b8;">Background</div>
<div class="a" style="left:164px;top:587px;width:1px;height:10px;background:#999;"></div>
<div class="a" style="left:170px;top:585px;width:10px;height:10px;background:#5a5a5a;border:1px solid #2a2a2a"></div>
<div class="t" style="left:198px;top:583px;font-size:12px;line-height:14px;color:#b8b8b8;">Fill</div>
<div class="a" style="left:241px;top:587px;width:1px;height:10px;background:#999;"></div>
<svg class="a" style="left:246px;top:584px;" width="11" height="12" viewBox="0 0 11 12"><rect x="0" y="0" width="11" height="12" fill="#262626"/><path d="M1 11 L10 1" stroke="#a55" stroke-width="1"/></svg>
<div class="t" style="left:267px;top:583px;font-size:12px;line-height:14px;color:#b8b8b8;">Stroke</div>
<div class="a" style="left:318px;top:587px;width:1px;height:10px;background:#999;"></div>
<div class="t" style="left:340px;top:583px;font-size:12px;line-height:14px;color:#b8b8b8;">Masks</div>
<div class="a" style="left:395px;top:587px;width:1px;height:10px;background:#999;"></div>
<div class="t" style="left:408px;top:583px;font-size:12px;line-height:14px;color:#b8b8b8;">Advanced</div>
<svg class="a" style="left:14px;top:606px;" width="11" height="11" viewBox="0 0 11 11"><circle cx="5.5" cy="5.5" r="4.4" fill="none" stroke="#666" stroke-width="1.1"/></svg>
<div class="t" style="left:30px;top:605px;font-size:12px;line-height:14px;color:#dedede;">Position</div>
<div class="a" style="left:177px;top:603px;width:94px;height:16px;background:#262626;border-radius:3px"></div>
<div class="t" style="left:181px;top:605px;font-size:12px;line-height:14px;color:#777;">X</div>
<div class="t" style="left:194px;top:605px;font-size:12px;line-height:14px;color:#e6e6e6;">3.9</div>
<div class="a" style="left:277px;top:603px;width:94px;height:16px;background:#262626;border-radius:3px"></div>
<div class="t" style="left:281px;top:605px;font-size:12px;line-height:14px;color:#777;">Y</div>
<div class="t" style="left:294px;top:605px;font-size:12px;line-height:14px;color:#e6e6e6;">87.62</div>
<svg class="a" style="left:14px;top:628px;" width="11" height="11" viewBox="0 0 11 11"><circle cx="5.5" cy="5.5" r="4.4" fill="none" stroke="#666" stroke-width="1.1"/></svg>
<div class="t" style="left:30px;top:627px;font-size:12px;line-height:14px;color:#dedede;">Rotation</div>
<div class="a" style="left:177px;top:625px;width:94px;height:16px;background:#262626;border-radius:3px"></div>
<div class="t" style="left:181px;top:627px;font-size:12px;line-height:14px;color:#777;">Z</div>
<div class="t" style="left:194px;top:627px;font-size:12px;line-height:14px;color:#e6e6e6;">0.0</div>
<svg class="a" style="left:14px;top:650px;" width="11" height="11" viewBox="0 0 11 11"><circle cx="5.5" cy="5.5" r="4.4" fill="none" stroke="#666" stroke-width="1.1"/></svg>
<div class="t" style="left:30px;top:649px;font-size:12px;line-height:14px;color:#dedede;">Scale</div>
<div class="a" style="left:177px;top:647px;width:94px;height:16px;background:#262626;border-radius:3px"></div>
<div class="t" style="left:181px;top:649px;font-size:12px;line-height:14px;color:#777;">X</div>
<div class="t" style="left:194px;top:649px;font-size:12px;line-height:14px;color:#e6e6e6;">1.0</div>
<div class="a" style="left:277px;top:647px;width:94px;height:16px;background:#262626;border-radius:3px"></div>
<div class="t" style="left:281px;top:649px;font-size:12px;line-height:14px;color:#777;">Y</div>
<div class="t" style="left:294px;top:649px;font-size:12px;line-height:14px;color:#e6e6e6;">1.0</div>
<svg class="a" style="left:14px;top:672px;" width="11" height="11" viewBox="0 0 11 11"><circle cx="5.5" cy="5.5" r="4.4" fill="none" stroke="#666" stroke-width="1.1"/></svg>
<div class="t" style="left:30px;top:671px;font-size:12px;line-height:14px;color:#dedede;">Skew</div>
<div class="a" style="left:177px;top:669px;width:94px;height:16px;background:#262626;border-radius:3px"></div>
<div class="t" style="left:181px;top:671px;font-size:12px;line-height:14px;color:#777;">X</div>
<div class="t" style="left:194px;top:671px;font-size:12px;line-height:14px;color:#e6e6e6;">0.0</div>
<div class="a" style="left:277px;top:669px;width:94px;height:16px;background:#262626;border-radius:3px"></div>
<div class="t" style="left:281px;top:671px;font-size:12px;line-height:14px;color:#777;">Y</div>
<div class="t" style="left:294px;top:671px;font-size:12px;line-height:14px;color:#e6e6e6;">0.0</div>
<svg class="a" style="left:14px;top:694px;" width="11" height="11" viewBox="0 0 11 11"><circle cx="5.5" cy="5.5" r="4.4" fill="none" stroke="#666" stroke-width="1.1"/></svg>
<div class="t" style="left:30px;top:693px;font-size:12px;line-height:14px;color:#dedede;">Pivot</div>
<div class="a" style="left:177px;top:691px;width:94px;height:16px;background:#262626;border-radius:3px"></div>
<div class="t" style="left:181px;top:693px;font-size:12px;line-height:14px;color:#777;">X</div>
<div class="t" style="left:194px;top:693px;font-size:12px;line-height:14px;color:#e6e6e6;">0.0</div>
<div class="a" style="left:277px;top:691px;width:94px;height:16px;background:#262626;border-radius:3px"></div>
<div class="t" style="left:281px;top:693px;font-size:12px;line-height:14px;color:#777;">Y</div>
<div class="t" style="left:294px;top:693px;font-size:12px;line-height:14px;color:#e6e6e6;">0.0</div>
<div class="a" style="left:377px;top:647px;width:16px;height:16px;background:#2a2a2a;border:1px solid #1f1f1f;border-radius:3px"></div>
<svg class="a" style="left:380px;top:649px;" width="10" height="12" viewBox="0 0 10 12"><path d="M2 5 V3.5 A3 3 0 0 1 8 3.5 V5 M2 7 V8.5 A3 3 0 0 0 8 8.5 V7" fill="none" stroke="#ccc" stroke-width="1.2"/></svg>
<div class="a" style="left:7.5px;top:712px;width:466.5px;height:1px;background:#1d1d1d;"></div>
<svg class="a" style="left:14px;top:721px;" width="11" height="11" viewBox="0 0 11 11"><circle cx="5.5" cy="5.5" r="4.4" fill="none" stroke="#666" stroke-width="1.1"/></svg>
<div class="t" style="left:30px;top:720px;font-size:12px;line-height:14px;color:#dedede;">Opacity</div>
<div class="a" style="left:177px;top:724px;width:189px;height:4px;background:#e0e0e0;border-radius:2px"></div>
<svg class="a" style="left:361px;top:721px;" width="11" height="11" viewBox="0 0 11 11"><circle cx="5.5" cy="5.5" r="5" fill="#6fcfb2"/><circle cx="5.5" cy="5.5" r="1.8" fill="#4a9e86"/></svg>
<div class="a" style="left:377px;top:718px;width:94px;height:16px;background:#262626;border-radius:3px"></div>
<div class="t" style="left:380px;top:721px;font-size:11px;line-height:13px;color:#777;">%</div>
<div class="t" style="left:394px;top:720px;font-size:12px;line-height:14px;color:#e6e6e6;">100.0</div>
<svg class="a" style="left:14px;top:743px;" width="11" height="11" viewBox="0 0 11 11"><circle cx="5.5" cy="5.5" r="4.4" fill="none" stroke="#666" stroke-width="1.1"/></svg>
<div class="t" style="left:30px;top:742px;font-size:12px;line-height:14px;color:#dedede;">Blend Mode</div>
<div class="a" style="left:178px;top:741px;width:192px;height:14px;background:#4a4a4a;border-radius:3px"></div>
<div class="t" style="left:180px;top:742px;font-size:12px;line-height:14px;color:#e6e6e6;">Normal</div>
<svg class="a" style="left:357px;top:747px;" width="10" height="6" viewBox="0 0 10 6"><path d="M0.5 0.5 L5 5 L9.5 0.5" stroke="#bbb" fill="none" stroke-width="1"/></svg>
<div class="t" style="left:30px;top:764px;font-size:12px;line-height:14px;color:#dedede;">Deformers</div>
<div class="t" style="left:30px;top:786px;font-size:12px;line-height:14px;color:#dedede;">Filters</div>
<div class="a" style="left:177px;top:762px;width:94px;height:16px;background:#262626;border-radius:3px"></div>
<svg class="a" style="left:179px;top:765px;" width="11" height="10" viewBox="0 0 11 10"><rect x="0" y="0" width="10" height="1" fill="#aaa"/><rect x="0" y="3" width="7" height="1" fill="#aaa"/><rect x="0" y="6" width="7" height="1" fill="#aaa"/><rect x="0" y="9" width="10" height="1" fill="#aaa"/></svg>
<div class="t" style="left:194px;top:764px;font-size:12px;line-height:14px;color:#bdbdbd;">0</div>
<div class="a" style="left:274px;top:762px;width:15px;height:16px;background:#2a2a2a;border:1px solid #1f1f1f;border-radius:3px"></div>
<svg class="a" style="left:276px;top:764px;" width="12" height="12" viewBox="0 0 12 12"><path d="M5.5 1.5 V10.5 M1 6 H10" stroke="#eee" stroke-width="1.6"/><path d="M9 11.5 l2 -2 v2z" fill="#49c99a"/></svg>
<div class="a" style="left:177px;top:784px;width:94px;height:16px;background:#262626;border-radius:3px"></div>
<svg class="a" style="left:179px;top:787px;" width="11" height="10" viewBox="0 0 11 10"><rect x="0" y="0" width="10" height="1" fill="#aaa"/><rect x="0" y="3" width="7" height="1" fill="#aaa"/><rect x="0" y="6" width="7" height="1" fill="#aaa"/><rect x="0" y="9" width="10" height="1" fill="#aaa"/></svg>
<div class="t" style="left:194px;top:786px;font-size:12px;line-height:14px;color:#bdbdbd;">0</div>
<div class="a" style="left:274px;top:784px;width:15px;height:16px;background:#2a2a2a;border:1px solid #1f1f1f;border-radius:3px"></div>
<svg class="a" style="left:276px;top:786px;" width="12" height="12" viewBox="0 0 12 12"><path d="M5.5 1.5 V10.5 M1 6 H10" stroke="#eee" stroke-width="1.6"/><path d="M9 11.5 l2 -2 v2z" fill="#49c99a"/></svg>
<div class="a" style="left:399px;top:763px;width:15px;height:15px;background:#2a2a2a;border:1px solid #1f1f1f;border-radius:3px"></div>
<div class="a" style="left:417px;top:763px;width:15px;height:15px;background:#2a2a2a;border:1px solid #1f1f1f;border-radius:3px"></div>
<div class="a" style="left:435px;top:763px;width:15px;height:15px;background:#2a2a2a;border:1px solid #1f1f1f;border-radius:3px"></div>
<svg class="a" style="left:399px;top:763px;" width="15" height="15" viewBox="0 0 15 15"><path d="M3 3 V12 H12" fill="none" stroke="#aaa" stroke-width="1"/><path d="M5 10 L10 5" stroke="#aaa" stroke-width="1"/><path d="M2 2.5 Q4 0.5 6 2 M10 13 Q12 14 13 11" fill="none" stroke="#6ab07a" stroke-width="1"/></svg>
<svg class="a" style="left:417px;top:763px;" width="15" height="15" viewBox="0 0 15 15"><path d="M2 7 Q4 1 7.5 7.5 T13 8" fill="none" stroke="#6ab07a" stroke-width="1.2"/><rect x="1" y="6" width="2.5" height="2.5" fill="none" stroke="#ddd" stroke-width="0.8"/><circle cx="7.5" cy="7.5" r="1.2" fill="none" stroke="#ddd" stroke-width="0.8"/><rect x="11.5" y="6.5" width="2.5" height="2.5" fill="none" stroke="#ddd" stroke-width="0.8"/></svg>
<svg class="a" style="left:435px;top:763px;" width="15" height="15" viewBox="0 0 15 15"><path d="M1 8 L3.5 3 L6 12 L8.5 3 L11 12 L13.5 6" fill="none" stroke="#6ab07a" stroke-width="1.2"/></svg>
<div class="a" style="left:452px;top:759px;width:1px;height:22px;background:#555;"></div>
<div class="a" style="left:456px;top:763px;width:15px;height:15px;background:#2a2a2a;border:1px solid #1f1f1f;border-radius:3px"></div>
<svg class="a" style="left:457px;top:765px;" width="13" height="11" viewBox="0 0 13 11"><rect x="1" y="0.5" width="11" height="2" fill="#8fdc98"/><rect x="1" y="4.5" width="11" height="2" fill="#ddd"/><rect x="1" y="8.5" width="11" height="1.5" fill="#999"/></svg>
<div class="a" style="left:456px;top:785px;width:15px;height:15px;background:#2a2a2a;border:1px solid #999;border-radius:2px"></div>
<svg class="a" style="left:459px;top:788px;" width="9" height="9" viewBox="0 0 9 9"><defs><radialGradient id="rg"><stop offset="0" stop-color="#ffd0d8"/><stop offset="1" stop-color="#c06070"/></radialGradient></defs><rect x="0" y="0" width="9" height="9" fill="url(#rg)"/></svg>
<svg class="a" style="left:14px;top:809px;" width="11" height="11" viewBox="0 0 11 11"><circle cx="5.5" cy="5.5" r="4.4" fill="none" stroke="#666" stroke-width="1.1"/></svg>
<div class="t" style="left:30px;top:808px;font-size:12px;line-height:14px;color:#dedede;">Motion Blur</div>
<div class="a" style="left:178px;top:807px;width:192px;height:14px;background:#4a4a4a;border-radius:3px"></div>
<div class="t" style="left:180px;top:808px;font-size:12px;line-height:14px;color:#e6e6e6;">None</div>
<svg class="a" style="left:357px;top:813px;" width="10" height="6" viewBox="0 0 10 6"><path d="M0.5 0.5 L5 5 L9.5 0.5" stroke="#bbb" fill="none" stroke-width="1"/></svg>
<div class="a" style="left:7.5px;top:827px;width:466.5px;height:1px;background:#1d1d1d;"></div>
<svg class="a" style="left:14px;top:836px;" width="11" height="11" viewBox="0 0 11 11"><circle cx="5.5" cy="5.5" r="4.4" fill="none" stroke="#666" stroke-width="1.1"/></svg>
<div class="t" style="left:30px;top:835px;font-size:12px;line-height:14px;color:#dedede;">String</div>
<div class="a" style="left:192px;top:833px;width:78px;height:17px;background:#2b2b2b;border:1px solid #232323;border-radius:4px"></div>
<div class="a" style="left:274px;top:833px;width:77px;height:17px;background:#2b2b2b;border:1px solid #232323;border-radius:4px"></div>
<div class="a" style="left:355px;top:833px;width:52px;height:17px;background:#2b2b2b;border:1px solid #232323;border-radius:4px"></div>
<div class="a" style="left:411px;top:833px;width:59px;height:17px;background:#2b2b2b;border:1px solid #232323;border-radius:4px"></div>
<svg class="a" style="left:198px;top:835px;" width="14" height="14" viewBox="0 0 14 14"><path d="M6 1 V11 M1 6 H11" stroke="#eee" stroke-width="1.6"/><path d="M10.5 13.5 l2.5 -2.5 v2.5z" fill="#49c99a"/></svg>
<div class="t" style="left:214px;top:835px;font-size:12px;line-height:14px;color:#e6e6e6;">Generator</div>
<svg class="a" style="left:279px;top:835px;" width="12" height="13" viewBox="0 0 12 13"><ellipse cx="6" cy="6.5" rx="4.5" ry="5.5" fill="none" stroke="#ddd" stroke-width="1.3"/><path d="M7.5 1.5 L4.5 11.5" stroke="#ddd" stroke-width="1"/></svg>
<div class="t" style="left:296px;top:835px;font-size:12px;line-height:14px;color:#e6e6e6;">OpenType</div>
<svg class="a" style="left:359px;top:835px;" width="14" height="13" viewBox="0 0 14 13"><path d="M3 6.5 A4.5 4.5 0 1 0 5 2.8" fill="none" stroke="#ddd" stroke-width="1.3"/><path d="M1 3.5 L5.5 1 L5.5 6z" fill="#ddd"/></svg>
<div class="t" style="left:376px;top:835px;font-size:12px;line-height:14px;color:#e6e6e6;">Reset</div>
<svg class="a" style="left:416px;top:835px;" width="13" height="12" viewBox="0 0 13 12"><path d="M6.5 1.5 L12 11 H1z" fill="none" stroke="#ddd" stroke-width="1.2"/></svg>
<div class="t" style="left:431px;top:835px;font-size:12px;line-height:14px;color:#e6e6e6;">Glyphs</div>
<div class="a" style="left:29px;top:854px;width:443px;height:62px;background:#262626;"></div>
<div class="t" style="left:34px;top:859px;font-size:12px;line-height:14px;color:#555;">T</div>
<div class="t" style="left:49px;top:859px;font-size:12px;line-height:14px;color:#e6e6e6;">Cavalry Typing Text 01</div>
<svg class="a" style="left:14px;top:924px;" width="11" height="11" viewBox="0 0 11 11"><circle cx="5.5" cy="5.5" r="4.4" fill="none" stroke="#666" stroke-width="1.1"/></svg>
<div class="t" style="left:30px;top:923px;font-size:12px;line-height:14px;color:#dedede;">Font</div>
<div class="a" style="left:178px;top:921px;width:190px;height:16px;background:#262626;border-radius:3px"></div>
<div class="t" style="left:181px;top:923px;font-size:12px;line-height:14px;color:#e6e6e6;">Montserrat</div>
<svg class="a" style="left:354px;top:926px;" width="10" height="6" viewBox="0 0 10 6"><path d="M0.5 0.5 L5 5 L9.5 0.5" stroke="#bbb" fill="none" stroke-width="1"/></svg>
<div class="a" style="left:372px;top:921px;width:98px;height:16px;background:#262626;border-radius:3px"></div>
<div class="t" style="left:375px;top:923px;font-size:12px;line-height:14px;color:#e6e6e6;">Bold</div>
<svg class="a" style="left:457px;top:926px;" width="10" height="6" viewBox="0 0 10 6"><path d="M0.5 0.5 L5 5 L9.5 0.5" stroke="#bbb" fill="none" stroke-width="1"/></svg>
<svg class="a" style="left:14px;top:946px;" width="11" height="11" viewBox="0 0 11 11"><circle cx="5.5" cy="5.5" r="4.4" fill="none" stroke="#666" stroke-width="1.1"/></svg>
<div class="t" style="left:30px;top:945px;font-size:12px;line-height:14px;color:#dedede;">Typeface</div>
<div class="a" style="left:177px;top:942px;width:294px;height:19px;background:#2d2d2d;border-radius:3px"></div>
<div class="t" style="left:181px;top:945px;font-size:12px;line-height:14px;color:#555;">C</div>
<div class="t" style="left:194px;top:945px;font-size:12px;line-height:14px;color:#8a8a8a;">No Connection</div>
<svg class="a" style="left:14px;top:968px;" width="11" height="11" viewBox="0 0 11 11"><circle cx="5.5" cy="5.5" r="4.4" fill="none" stroke="#666" stroke-width="1.1"/></svg>
<div class="t" style="left:30px;top:967px;font-size:12px;line-height:14px;color:#dedede;">Font Size</div>
<div class="a" style="left:178px;top:966px;width:92px;height:14px;background:#262626;border-radius:3px"></div>
<div class="t" style="left:182px;top:968px;font-size:11px;line-height:13px;color:#666;">#</div>
<div class="t" style="left:194px;top:967px;font-size:12px;line-height:14px;color:#e6e6e6;">130.0</div>
<div class="t" style="left:30px;top:989px;font-size:12px;line-height:14px;color:#dedede;">Style</div>
<div class="a" style="left:177px;top:986px;width:17px;height:18px;background:#2b2b2b;border:1px solid #1f1f1f;border-radius:4px"></div>
<div class="a" style="left:197px;top:986px;width:17px;height:18px;background:#2b2b2b;border:1px solid #1f1f1f;border-radius:4px"></div>
<div class="a" style="left:217px;top:986px;width:17px;height:18px;background:#2b2b2b;border:1px solid #1f1f1f;border-radius:4px"></div>
<div class="a" style="left:237px;top:986px;width:17px;height:18px;background:#2b2b2b;border:1px solid #1f1f1f;border-radius:4px"></div>
<div class="a" style="left:258px;top:986px;width:18px;height:18px;background:#212121;border:1px solid #1a1a1a;border-radius:4px"></div>
<svg class="a" style="left:180px;top:989px;" width="11" height="12" viewBox="0 0 11 12"><path d="M2.5 1 V6 A3 3 0 0 0 8.5 6 V1" fill="none" stroke="#ccc" stroke-width="1.1"/><rect x="1.5" y="10" width="8" height="1" fill="#ccc"/></svg>
<svg class="a" style="left:200px;top:989px;" width="11" height="12" viewBox="0 0 11 12"><path d="M8.5 3 A3.5 2.5 0 1 0 5.5 5.5 A3.5 2.5 0 1 1 2.5 8.5" fill="none" stroke="#ccc" stroke-width="1.1"/><rect x="0.5" y="5.5" width="10" height="1" fill="#ccc"/></svg>
<svg class="a" style="left:220px;top:989px;" width="11" height="12" viewBox="0 0 11 12"><path d="M0.5 1.5 H7.5 M4 1.5 V10" stroke="#ccc" stroke-width="1.1"/><rect x="8.5" y="8" width="1" height="3" fill="#ccc"/></svg>
<svg class="a" style="left:240px;top:989px;" width="11" height="12" viewBox="0 0 11 12"><path d="M0.5 1.5 H7.5 M4 1.5 V10" stroke="#ccc" stroke-width="1.1"/><rect x="9" y="0.5" width="1" height="2.5" fill="#ccc"/></svg>
<svg class="a" style="left:261px;top:989px;" width="12" height="12" viewBox="0 0 12 12"><circle cx="6" cy="6" r="3.2" fill="none" stroke="#ddd" stroke-width="2.2"/><rect x="5" y="0" width="2" height="3" fill="#ddd" transform="rotate(0 6 6)"/><rect x="5" y="0" width="2" height="3" fill="#ddd" transform="rotate(45 6 6)"/><rect x="5" y="0" width="2" height="3" fill="#ddd" transform="rotate(90 6 6)"/><rect x="5" y="0" width="2" height="3" fill="#ddd" transform="rotate(135 6 6)"/><rect x="5" y="0" width="2" height="3" fill="#ddd" transform="rotate(180 6 6)"/><rect x="5" y="0" width="2" height="3" fill="#ddd" transform="rotate(225 6 6)"/><rect x="5" y="0" width="2" height="3" fill="#ddd" transform="rotate(270 6 6)"/><rect x="5" y="0" width="2" height="3" fill="#ddd" transform="rotate(315 6 6)"/></svg>
<svg class="a" style="left:14px;top:1012px;" width="11" height="11" viewBox="0 0 11 11"><circle cx="5.5" cy="5.5" r="4.4" fill="none" stroke="#666" stroke-width="1.1"/></svg>
<div class="t" style="left:30px;top:1011px;font-size:12px;line-height:14px;color:#dedede;">Alignment</div>
<div class="a" style="left:177px;top:1008px;width:75px;height:16px;background:#555;border-radius:3px 3px 0 0"></div>
<div class="a" style="left:197px;top:1009px;width:16px;height:15px;background:#2a2a2a;border-radius:2px 2px 0 0"></div>
<svg class="a" style="left:180.0px;top:1012px;" width="12" height="10" viewBox="0 0 12 10"><rect x="0" y="0" width="10" height="1.2" fill="#ddd"/><rect x="0" y="4" width="6" height="1.2" fill="#ddd"/><rect x="0" y="8" width="8" height="1.2" fill="#ddd"/></svg>
<svg class="a" style="left:199.5px;top:1012px;" width="12" height="10" viewBox="0 0 12 10"><rect x="1" y="0" width="10" height="1.2" fill="#3ecf6a"/><rect x="3" y="4" width="6" height="1.2" fill="#3ecf6a"/><rect x="2" y="8" width="8" height="1.2" fill="#3ecf6a"/></svg>
<svg class="a" style="left:219.0px;top:1012px;" width="12" height="10" viewBox="0 0 12 10"><rect x="1" y="0" width="10" height="1.2" fill="#ddd"/><rect x="5" y="4" width="6" height="1.2" fill="#ddd"/><rect x="3" y="8" width="8" height="1.2" fill="#ddd"/></svg>
<svg class="a" style="left:238.5px;top:1012px;" width="12" height="10" viewBox="0 0 12 10"><rect x="0" y="0" width="10" height="1.2" fill="#ddd"/><rect x="0" y="4" width="10" height="1.2" fill="#ddd"/><rect x="0" y="8" width="10" height="1.2" fill="#ddd"/></svg>
<div class="a" style="left:6px;top:1024px;width:482px;height:6px;background:#262626;"></div>
<div class="a" style="left:494px;top:85px;width:30px;height:546px;background:#474747;"></div>
<div class="a" style="left:494px;top:85px;width:30px;height:10px;background:#3c3c3c;"></div>
<div class="a" style="left:503px;top:89px;width:2px;height:2px;background:#8a8a8a;"></div>
<div class="a" style="left:508px;top:89px;width:2px;height:2px;background:#8a8a8a;"></div>
<div class="a" style="left:513px;top:89px;width:2px;height:2px;background:#8a8a8a;"></div>
<svg class="a" style="left:499px;top:99px;" width="20" height="20" viewBox="0 0 20 20"><defs><linearGradient id="wg" x1="0" y1="0" x2="0" y2="1"><stop offset="0" stop-color="#f4f4f4"/><stop offset="1" stop-color="#cfcfcf"/></linearGradient></defs><path d="M4.5 1.5 L4.5 17 L8.3 13.3 L11 19 L13.5 17.8 L10.8 12.3 L16 12.3z" fill="none" stroke="#ddd" stroke-width="1.1"/></svg>
<svg class="a" style="left:499px;top:130px;" width="20" height="20" viewBox="0 0 20 20"><defs><linearGradient id="wg" x1="0" y1="0" x2="0" y2="1"><stop offset="0" stop-color="#f4f4f4"/><stop offset="1" stop-color="#cfcfcf"/></linearGradient></defs><path d="M4 0 L4 20 L9 14.5 L17 14.5z" fill="url(#wg)"/></svg>
<svg class="a" style="left:499px;top:160px;" width="20" height="20" viewBox="0 0 20 20"><defs><linearGradient id="wg" x1="0" y1="0" x2="0" y2="1"><stop offset="0" stop-color="#f4f4f4"/><stop offset="1" stop-color="#cfcfcf"/></linearGradient></defs><path d="M3 2 L11 5 L15 11 L12 14 L6 10z" fill="url(#wg)"/><circle cx="9" cy="8.5" r="1.2" fill="#333"/><path d="M12.5 15.5 L16.5 11.5 L18 13 L14 17z" fill="url(#wg)"/></svg>
<svg class="a" style="left:499px;top:189.5px;" width="20" height="20" viewBox="0 0 20 20"><defs><linearGradient id="wg" x1="0" y1="0" x2="0" y2="1"><stop offset="0" stop-color="#f4f4f4"/><stop offset="1" stop-color="#cfcfcf"/></linearGradient></defs><path d="M3 17 L4 13.5 L14.5 3 L17 5.5 L6.5 16z" fill="url(#wg)"/><circle cx="16.5" cy="3.5" r="2" fill="#eee"/><path d="M2 18.5 L3.2 16" stroke="#ddd" stroke-width="1.5"/></svg>
<svg class="a" style="left:499px;top:219px;" width="20" height="20" viewBox="0 0 20 20"><defs><linearGradient id="wg" x1="0" y1="0" x2="0" y2="1"><stop offset="0" stop-color="#f4f4f4"/><stop offset="1" stop-color="#cfcfcf"/></linearGradient></defs><rect x="6" y="3" width="5" height="1.2" fill="#ddd"/><rect x="1" y="5" width="11" height="10" rx="1" fill="url(#wg)"/><path d="M12 10 L19 5.5 V14.5z" fill="url(#wg)"/><circle cx="4" cy="8" r="1.2" fill="#444"/></svg>
<svg class="a" style="left:499px;top:249.5px;" width="20" height="20" viewBox="0 0 20 20"><defs><linearGradient id="wg" x1="0" y1="0" x2="0" y2="1"><stop offset="0" stop-color="#f4f4f4"/><stop offset="1" stop-color="#cfcfcf"/></linearGradient></defs><path d="M2 18 L18 2" stroke="#ddd" stroke-width="1.1"/></svg>
<div class="a" style="left:495px;top:276px;width:28px;height:28px;background:#1a1a1a;border-radius:4px"></div>
<svg class="a" style="left:502px;top:281px;" width="14" height="17" viewBox="0 0 14 17"><rect x="0" y="0" width="14" height="3" fill="#3ecf6a"/><rect x="5.5" y="0" width="3" height="17" fill="#3ecf6a"/></svg>
<svg class="a" style="left:499px;top:309.5px;" width="20" height="20" viewBox="0 0 20 20"><defs><linearGradient id="wg" x1="0" y1="0" x2="0" y2="1"><stop offset="0" stop-color="#f4f4f4"/><stop offset="1" stop-color="#cfcfcf"/></linearGradient></defs><path d="M3 2 L3 10 L6 7 L11 7z" fill="url(#wg)"/><rect x="15" y="1.5" width="2.5" height="2.5" fill="#eee"/><rect x="1.5" y="16" width="2.5" height="2.5" fill="#eee"/><rect x="16" y="16" width="2.5" height="2.5" fill="#eee"/><path d="M8 3 L14 2.5 M16.3 5 L17.3 15.5 M4.5 17.3 L15 17.3 M2.8 12 V15" stroke="#ddd" stroke-width="0.9"/></svg>
<svg class="a" style="left:499px;top:339.5px;" width="20" height="20" viewBox="0 0 20 20"><defs><linearGradient id="wg" x1="0" y1="0" x2="0" y2="1"><stop offset="0" stop-color="#f4f4f4"/><stop offset="1" stop-color="#cfcfcf"/></linearGradient></defs><rect x="3" y="3" width="14" height="14.5" fill="url(#wg)"/></svg>
<svg class="a" style="left:499px;top:370px;" width="20" height="20" viewBox="0 0 20 20"><defs><linearGradient id="wg" x1="0" y1="0" x2="0" y2="1"><stop offset="0" stop-color="#f4f4f4"/><stop offset="1" stop-color="#cfcfcf"/></linearGradient></defs><circle cx="10" cy="10" r="8" fill="url(#wg)"/></svg>
<svg class="a" style="left:499px;top:400px;" width="20" height="20" viewBox="0 0 20 20"><defs><linearGradient id="wg" x1="0" y1="0" x2="0" y2="1"><stop offset="0" stop-color="#f4f4f4"/><stop offset="1" stop-color="#cfcfcf"/></linearGradient></defs><path d="M10 1.5 L18.5 7.8 L15.3 18 H4.7 L1.5 7.8z" fill="url(#wg)"/></svg>
<svg class="a" style="left:499px;top:430px;" width="20" height="20" viewBox="0 0 20 20"><defs><linearGradient id="wg" x1="0" y1="0" x2="0" y2="1"><stop offset="0" stop-color="#f4f4f4"/><stop offset="1" stop-color="#cfcfcf"/></linearGradient></defs><path d="M10 1 L12.3 7.3 L19 7.4 L13.7 11.4 L15.6 18 L10 14 L4.4 18 L6.3 11.4 L1 7.4 L7.7 7.3z" fill="url(#wg)"/></svg>
<svg class="a" style="left:499px;top:460px;" width="20" height="20" viewBox="0 0 20 20"><defs><linearGradient id="wg" x1="0" y1="0" x2="0" y2="1"><stop offset="0" stop-color="#f4f4f4"/><stop offset="1" stop-color="#cfcfcf"/></linearGradient></defs><path d="M15.5 8 A6.5 6.5 0 1 0 9 16.5" fill="none" stroke="url(#wg)" stroke-width="3.2"/></svg>
<svg class="a" style="left:499px;top:489.5px;" width="20" height="20" viewBox="0 0 20 20"><defs><linearGradient id="wg" x1="0" y1="0" x2="0" y2="1"><stop offset="0" stop-color="#f4f4f4"/><stop offset="1" stop-color="#cfcfcf"/></linearGradient></defs><path d="M10 1 Q11.5 8.5 19 10 Q11.5 11.5 10 19 Q8.5 11.5 1 10 Q8.5 8.5 10 1z" fill="url(#wg)"/></svg>
<svg class="a" style="left:498px;top:519px;" width="22" height="22" viewBox="0 0 22 22"><defs><linearGradient id="wg" x1="0" y1="0" x2="0" y2="1"><stop offset="0" stop-color="#f4f4f4"/><stop offset="1" stop-color="#cfcfcf"/></linearGradient></defs><circle cx="10" cy="10" r="6" fill="none" stroke="url(#wg)" stroke-width="4.2"/><rect x="8.2" y="0.8" width="3.6" height="4" fill="#e8e8e8" transform="rotate(0 10 10)"/><rect x="8.2" y="0.8" width="3.6" height="4" fill="#e8e8e8" transform="rotate(45 10 10)"/><rect x="8.2" y="0.8" width="3.6" height="4" fill="#e8e8e8" transform="rotate(90 10 10)"/><rect x="8.2" y="0.8" width="3.6" height="4" fill="#e8e8e8" transform="rotate(135 10 10)"/><rect x="8.2" y="0.8" width="3.6" height="4" fill="#e8e8e8" transform="rotate(180 10 10)"/><rect x="8.2" y="0.8" width="3.6" height="4" fill="#e8e8e8" transform="rotate(225 10 10)"/><rect x="8.2" y="0.8" width="3.6" height="4" fill="#e8e8e8" transform="rotate(270 10 10)"/><rect x="8.2" y="0.8" width="3.6" height="4" fill="#e8e8e8" transform="rotate(315 10 10)"/></svg>
<svg class="a" style="left:498px;top:548.5px;" width="22" height="22" viewBox="0 0 22 22"><defs><linearGradient id="wg" x1="0" y1="0" x2="0" y2="1"><stop offset="0" stop-color="#f4f4f4"/><stop offset="1" stop-color="#cfcfcf"/></linearGradient></defs><path d="M0.5 11 L7 4.5 V9 H15 V4.5 L21.5 11 L15 17.5 V13 H7 V17.5z" fill="url(#wg)"/></svg>
<svg class="a" style="left:499px;top:580px;" width="20" height="20" viewBox="0 0 20 20"><defs><linearGradient id="wg" x1="0" y1="0" x2="0" y2="1"><stop offset="0" stop-color="#f4f4f4"/><stop offset="1" stop-color="#cfcfcf"/></linearGradient></defs><rect x="0.5" y="6" width="19" height="8.5" rx="4.2" fill="url(#wg)"/></svg>
<div class="a" style="left:530px;top:85px;width:1057px;height:22px;background:#1d1d1d;"></div>
<div class="a" style="left:530px;top:85px;width:136px;height:22px;background:#444;border-radius:4px 4px 0 0"></div>
<div class="t" style="left:535px;top:90px;font-size:11.7px;line-height:13px;color:#e2e2e2;">Jumping Text Coloring 1</div>
<div class="a" style="left:530px;top:107px;width:1057px;height:524px;background:#474747;"></div>
<div class="a" style="left:550px;top:127px;width:1037px;height:482px;background:#000;"></div>
<div class="t" style="left:536px;top:111px;font-size:10px;line-height:12px;color:#aaa;">px</div>
<svg class="a" style="left:530px;top:107px;" width="1058" height="20" viewBox="0 0 1058 20"><rect x="31.70" y="13" width="1" height="7" fill="#999"/><rect x="44.36" y="16" width="1" height="4" fill="#888"/><rect x="57.02" y="16" width="1" height="4" fill="#888"/><rect x="69.68" y="16" width="1" height="4" fill="#888"/><rect x="82.34" y="16" width="1" height="4" fill="#888"/><rect x="95.00" y="13" width="1" height="7" fill="#999"/><rect x="107.66" y="16" width="1" height="4" fill="#888"/><rect x="120.32" y="16" width="1" height="4" fill="#888"/><rect x="132.98" y="16" width="1" height="4" fill="#888"/><rect x="145.64" y="16" width="1" height="4" fill="#888"/><rect x="158.30" y="13" width="1" height="7" fill="#999"/><rect x="170.96" y="16" width="1" height="4" fill="#888"/><rect x="183.62" y="16" width="1" height="4" fill="#888"/><rect x="196.28" y="16" width="1" height="4" fill="#888"/><rect x="208.94" y="16" width="1" height="4" fill="#888"/><rect x="221.60" y="13" width="1" height="7" fill="#999"/><rect x="234.26" y="16" width="1" height="4" fill="#888"/><rect x="246.92" y="16" width="1" height="4" fill="#888"/><rect x="259.58" y="16" width="1" height="4" fill="#888"/><rect x="272.24" y="16" width="1" height="4" fill="#888"/><rect x="284.90" y="13" width="1" height="7" fill="#999"/><rect x="297.56" y="16" width="1" height="4" fill="#888"/><rect x="310.22" y="16" width="1" height="4" fill="#888"/><rect x="322.88" y="16" width="1" height="4" fill="#888"/><rect x="335.54" y="16" width="1" height="4" fill="#888"/><rect x="348.20" y="13" width="1" height="7" fill="#999"/><rect x="360.86" y="16" width="1" height="4" fill="#888"/><rect x="373.52" y="16" width="1" height="4" fill="#888"/><rect x="386.18" y="16" width="1" height="4" fill="#888"/><rect x="398.84" y="16" width="1" height="4" fill="#888"/><rect x="411.50" y="13" width="1" height="7" fill="#999"/><rect x="424.16" y="16" width="1" height="4" fill="#888"/><rect x="436.82" y="16" width="1" height="4" fill="#888"/><rect x="449.48" y="16" width="1" height="4" fill="#888"/><rect x="462.14" y="16" width="1" height="4" fill="#888"/><rect x="474.80" y="13" width="1" height="7" fill="#999"/><rect x="487.46" y="16" width="1" height="4" fill="#888"/><rect x="500.12" y="16" width="1" height="4" fill="#888"/><rect x="512.78" y="16" width="1" height="4" fill="#888"/><rect x="525.44" y="16" width="1" height="4" fill="#888"/><rect x="538.10" y="13" width="1" height="7" fill="#999"/><rect x="550.76" y="16" width="1" height="4" fill="#888"/><rect x="563.42" y="16" width="1" height="4" fill="#888"/><rect x="576.08" y="16" width="1" height="4" fill="#888"/><rect x="588.74" y="16" width="1" height="4" fill="#888"/><rect x="601.40" y="13" width="1" height="7" fill="#999"/><rect x="614.06" y="16" width="1" height="4" fill="#888"/><rect x="626.72" y="16" width="1" height="4" fill="#888"/><rect x="639.38" y="16" width="1" height="4" fill="#888"/><rect x="652.04" y="16" width="1" height="4" fill="#888"/><rect x="664.70" y="13" width="1" height="7" fill="#999"/><rect x="677.36" y="16" width="1" height="4" fill="#888"/><rect x="690.02" y="16" width="1" height="4" fill="#888"/><rect x="702.68" y="16" width="1" height="4" fill="#888"/><rect x="715.34" y="16" width="1" height="4" fill="#888"/><rect x="728.00" y="13" width="1" height="7" fill="#999"/><rect x="740.66" y="16" width="1" height="4" fill="#888"/><rect x="753.32" y="16" width="1" height="4" fill="#888"/><rect x="765.98" y="16" width="1" height="4" fill="#888"/><rect x="778.64" y="16" width="1" height="4" fill="#888"/><rect x="791.30" y="13" width="1" height="7" fill="#999"/><rect x="803.96" y="16" width="1" height="4" fill="#888"/><rect x="816.62" y="16" width="1" height="4" fill="#888"/><rect x="829.28" y="16" width="1" height="4" fill="#888"/><rect x="841.94" y="16" width="1" height="4" fill="#888"/><rect x="854.60" y="13" width="1" height="7" fill="#999"/><rect x="867.26" y="16" width="1" height="4" fill="#888"/><rect x="879.92" y="16" width="1" height="4" fill="#888"/><rect x="892.58" y="16" width="1" height="4" fill="#888"/><rect x="905.24" y="16" width="1" height="4" fill="#888"/><rect x="917.90" y="13" width="1" height="7" fill="#999"/><rect x="930.56" y="16" width="1" height="4" fill="#888"/><rect x="943.22" y="16" width="1" height="4" fill="#888"/><rect x="955.88" y="16" width="1" height="4" fill="#888"/><rect x="968.54" y="16" width="1" height="4" fill="#888"/><rect x="981.20" y="13" width="1" height="7" fill="#999"/><rect x="993.86" y="16" width="1" height="4" fill="#888"/><rect x="1006.52" y="16" width="1" height="4" fill="#888"/><rect x="1019.18" y="16" width="1" height="4" fill="#888"/><rect x="1031.84" y="16" width="1" height="4" fill="#888"/><rect x="1044.50" y="13" width="1" height="7" fill="#999"/></svg>
<div class="t" style="left:585.0px;top:109px;width:80px;text-align:center;font-size:10px;line-height:12px;color:#c8c8c8">-1050</div>
<div class="t" style="left:648.3px;top:109px;width:80px;text-align:center;font-size:10px;line-height:12px;color:#c8c8c8">-900</div>
<div class="t" style="left:711.6px;top:109px;width:80px;text-align:center;font-size:10px;line-height:12px;color:#c8c8c8">-750</div>
<div class="t" style="left:774.9px;top:109px;width:80px;text-align:center;font-size:10px;line-height:12px;color:#c8c8c8">-600</div>
<div class="t" style="left:838.2px;top:109px;width:80px;text-align:center;font-size:10px;line-height:12px;color:#c8c8c8">-450</div>
<div class="t" style="left:901.5px;top:109px;width:80px;text-align:center;font-size:10px;line-height:12px;color:#c8c8c8">-300</div>
<div class="t" style="left:964.8px;top:109px;width:80px;text-align:center;font-size:10px;line-height:12px;color:#c8c8c8">-150</div>
<div class="t" style="left:1028.1px;top:109px;width:80px;text-align:center;font-size:10px;line-height:12px;color:#c8c8c8">0</div>
<div class="t" style="left:1091.4px;top:109px;width:80px;text-align:center;font-size:10px;line-height:12px;color:#c8c8c8">150</div>
<div class="t" style="left:1154.7px;top:109px;width:80px;text-align:center;font-size:10px;line-height:12px;color:#c8c8c8">300</div>
<div class="t" style="left:1218.0px;top:109px;width:80px;text-align:center;font-size:10px;line-height:12px;color:#c8c8c8">450</div>
<div class="t" style="left:1281.3px;top:109px;width:80px;text-align:center;font-size:10px;line-height:12px;color:#c8c8c8">600</div>
<div class="t" style="left:1344.6px;top:109px;width:80px;text-align:center;font-size:10px;line-height:12px;color:#c8c8c8">750</div>
<div class="t" style="left:1407.9px;top:109px;width:80px;text-align:center;font-size:10px;line-height:12px;color:#c8c8c8">900</div>
<div class="t" style="left:1471.2px;top:109px;width:80px;text-align:center;font-size:10px;line-height:12px;color:#c8c8c8">1050</div>
<div class="t" style="left:1534.5px;top:109px;width:80px;text-align:center;font-size:10px;line-height:12px;color:#c8c8c8">1200</div>
<svg class="a" style="left:530px;top:127px;" width="20" height="482" viewBox="0 0 20 482"><rect x="16" y="480.84" width="4" height="1" fill="#888"/><rect x="16" y="468.18" width="4" height="1" fill="#888"/><rect x="16" y="455.52" width="4" height="1" fill="#888"/><rect x="16" y="442.86" width="4" height="1" fill="#888"/><rect x="13" y="430.20" width="7" height="1" fill="#999"/><rect x="16" y="417.54" width="4" height="1" fill="#888"/><rect x="16" y="404.88" width="4" height="1" fill="#888"/><rect x="16" y="392.22" width="4" height="1" fill="#888"/><rect x="16" y="379.56" width="4" height="1" fill="#888"/><rect x="13" y="366.90" width="7" height="1" fill="#999"/><rect x="16" y="354.24" width="4" height="1" fill="#888"/><rect x="16" y="341.58" width="4" height="1" fill="#888"/><rect x="16" y="328.92" width="4" height="1" fill="#888"/><rect x="16" y="316.26" width="4" height="1" fill="#888"/><rect x="13" y="303.60" width="7" height="1" fill="#999"/><rect x="16" y="290.94" width="4" height="1" fill="#888"/><rect x="16" y="278.28" width="4" height="1" fill="#888"/><rect x="16" y="265.62" width="4" height="1" fill="#888"/><rect x="16" y="252.96" width="4" height="1" fill="#888"/><rect x="13" y="240.30" width="7" height="1" fill="#999"/><rect x="16" y="227.64" width="4" height="1" fill="#888"/><rect x="16" y="214.98" width="4" height="1" fill="#888"/><rect x="16" y="202.32" width="4" height="1" fill="#888"/><rect x="16" y="189.66" width="4" height="1" fill="#888"/><rect x="13" y="177.00" width="7" height="1" fill="#999"/><rect x="16" y="164.34" width="4" height="1" fill="#888"/><rect x="16" y="151.68" width="4" height="1" fill="#888"/><rect x="16" y="139.02" width="4" height="1" fill="#888"/><rect x="16" y="126.36" width="4" height="1" fill="#888"/><rect x="13" y="113.70" width="7" height="1" fill="#999"/><rect x="16" y="101.04" width="4" height="1" fill="#888"/><rect x="16" y="88.38" width="4" height="1" fill="#888"/><rect x="16" y="75.72" width="4" height="1" fill="#888"/><rect x="16" y="63.06" width="4" height="1" fill="#888"/><rect x="13" y="50.40" width="7" height="1" fill="#999"/><rect x="16" y="37.74" width="4" height="1" fill="#888"/><rect x="16" y="25.08" width="4" height="1" fill="#888"/><rect x="16" y="12.42" width="4" height="1" fill="#888"/></svg>
<div class="t" style="left:531px;top:551.2px;width:14px;height:14px;font-size:10px;line-height:14px;color:#c8c8c8;"><div style="position:absolute;left:7px;top:7px;transform:translate(-50%,-50%) rotate(-90deg);white-space:nowrap">-450</div></div>
<div class="t" style="left:531px;top:487.9px;width:14px;height:14px;font-size:10px;line-height:14px;color:#c8c8c8;"><div style="position:absolute;left:7px;top:7px;transform:translate(-50%,-50%) rotate(-90deg);white-space:nowrap">-300</div></div>
<div class="t" style="left:531px;top:424.6px;width:14px;height:14px;font-size:10px;line-height:14px;color:#c8c8c8;"><div style="position:absolute;left:7px;top:7px;transform:translate(-50%,-50%) rotate(-90deg);white-space:nowrap">-150</div></div>
<div class="t" style="left:531px;top:361.3px;width:14px;height:14px;font-size:10px;line-height:14px;color:#c8c8c8;"><div style="position:absolute;left:7px;top:7px;transform:translate(-50%,-50%) rotate(-90deg);white-space:nowrap">0</div></div>
<div class="t" style="left:531px;top:298.0px;width:14px;height:14px;font-size:10px;line-height:14px;color:#c8c8c8;"><div style="position:absolute;left:7px;top:7px;transform:translate(-50%,-50%) rotate(-90deg);white-space:nowrap">150</div></div>
<div class="t" style="left:531px;top:234.7px;width:14px;height:14px;font-size:10px;line-height:14px;color:#c8c8c8;"><div style="position:absolute;left:7px;top:7px;transform:translate(-50%,-50%) rotate(-90deg);white-space:nowrap">300</div></div>
<div class="t" style="left:531px;top:171.4px;width:14px;height:14px;font-size:10px;line-height:14px;color:#c8c8c8;"><div style="position:absolute;left:7px;top:7px;transform:translate(-50%,-50%) rotate(-90deg);white-space:nowrap">450</div></div>
<div class="a" style="left:662px;top:140px;width:811px;height:456px;background:#fff;"></div>
<div class="t" style="left:570px;top:589px;font-size:12px;line-height:14px;color:#eaeaea;">00:00:00:00</div>
<div class="t" style="left:998px;top:589px;font-size:12px;line-height:14px;color:#000;text-shadow:0 0 1px #fff,0 0 1px #fff,0 0 1px #fff;transform:scaleX(1.0211);transform-origin:0 0">Viewport Quality: High</div>
<svg class="a" style="left:1020px;top:282px;" width="20" height="20" viewBox="0 0 20 20"><path d="M10 2.6 L17.4 10 L10 17.4 L2.6 10z" fill="none" stroke="#3ecf6a" stroke-width="1.2"/></svg>
<svg class="a" style="left:1040px;top:300px;" width="80" height="145" viewBox="0 0 80 145"><rect x="16.0" y="17.5" width="7" height="7" fill="none" stroke="#8f8f8f" stroke-width="1.1"/><rect x="16.0" y="104.0" width="7" height="7" fill="none" stroke="#8f8f8f" stroke-width="1.1"/><rect x="26.0" y="17.5" width="7" height="7" fill="none" stroke="#8f8f8f" stroke-width="1.1"/><rect x="26.0" y="104.0" width="7" height="7" fill="none" stroke="#8f8f8f" stroke-width="1.1"/><rect x="36.0" y="17.5" width="7" height="7" fill="none" stroke="#8f8f8f" stroke-width="1.1"/><rect x="36.0" y="104.0" width="7" height="7" fill="none" stroke="#8f8f8f" stroke-width="1.1"/><rect x="16.0" y="61.0" width="7" height="7" fill="none" stroke="#8f8f8f" stroke-width="1.1"/><rect x="36.0" y="61.0" width="7" height="7" fill="none" stroke="#8f8f8f" stroke-width="1.1"/><path d="M19.5 329 V357 M19.5 372 V400 M19.5 415 V431" stroke="#c8c8c8" stroke-width="1" stroke-dasharray="3 3" transform="translate(0,-300)"/><path d="M12.5 126 L19.5 131 L26.5 126" fill="none" stroke="#ddd" stroke-width="1" stroke-dasharray="2 2"/><path d="M39.5 329 V357 M39.5 372 V400 M39.5 415 V431" stroke="#c8c8c8" stroke-width="1" stroke-dasharray="3 3" transform="translate(0,-300)"/><path d="M32.5 126 L39.5 131 L46.5 126" fill="none" stroke="#ddd" stroke-width="1" stroke-dasharray="2 2"/><path d="M47 21 H64" stroke="#ddd" stroke-width="1" stroke-dasharray="3 2"/><path d="M58 14 L65 21 L58 28" fill="none" stroke="#ddd" stroke-width="1" stroke-dasharray="2 2"/><path d="M47 107.5 H64" stroke="#ddd" stroke-width="1" stroke-dasharray="3 2"/><path d="M58 100.5 L65 107.5 L58 114.5" fill="none" stroke="#ddd" stroke-width="1" stroke-dasharray="2 2"/><path d="M70 128 V138 H60" fill="none" stroke="#3ecf6a" stroke-width="2"/></svg>
<div class="a" style="left:535px;top:612px;width:78px;height:16px;background:#2f2f2f;border-radius:3px"></div>
<div class="t" style="left:537px;top:615px;font-size:12px;line-height:14px;color:#e6e6e6;">42%</div>
<svg class="a" style="left:601px;top:617px;" width="10" height="6" viewBox="0 0 10 6"><path d="M0.5 0.5 L5 5 L9.5 0.5" stroke="#bbb" fill="none" stroke-width="1"/></svg>
<div class="a" style="left:866px;top:611px;width:20px;height:18px;background:#2b2b2b;border:1px solid #222;border-radius:3px"></div>
<div class="a" style="left:886px;top:611px;width:20px;height:18px;background:#2b2b2b;border:1px solid #222;border-radius:3px"></div>
<div class="a" style="left:906px;top:611px;width:20px;height:18px;background:#2b2b2b;border:1px solid #222;border-radius:3px"></div>
<div class="a" style="left:926px;top:611px;width:20px;height:18px;background:#2b2b2b;border:1px solid #222;border-radius:3px"></div>
<div class="a" style="left:946px;top:611px;width:20px;height:18px;background:#2b2b2b;border:1px solid #222;border-radius:3px"></div>
<div class="a" style="left:971px;top:611px;width:20px;height:18px;background:#2b2b2b;border:1px solid #222;border-radius:3px"></div>
<svg class="a" style="left:866px;top:611px;" width="20" height="18" viewBox="0 0 20 18"><rect x="5" y="4" width="1.5" height="10" fill="#e6e6e6"/><path d="M15 4 L7 9 L15 14z" fill="#e6e6e6"/></svg>
<svg class="a" style="left:886px;top:611px;" width="20" height="18" viewBox="0 0 20 18"><path d="M11 4 L4 9 L11 14z" fill="#e6e6e6"/><rect x="13" y="4" width="1.5" height="10" fill="#e6e6e6"/></svg>
<svg class="a" style="left:906px;top:611px;" width="20" height="18" viewBox="0 0 20 18"><path d="M6 4 L15 9 L6 14z" fill="#e6e6e6"/></svg>
<svg class="a" style="left:926px;top:611px;" width="20" height="18" viewBox="0 0 20 18"><rect x="5" y="4" width="1.5" height="10" fill="#e6e6e6"/><path d="M9 4 L16 9 L9 14z" fill="#e6e6e6"/></svg>
<svg class="a" style="left:946px;top:611px;" width="20" height="18" viewBox="0 0 20 18"><path d="M4 4 L12 9 L4 14z" fill="#e6e6e6"/><rect x="13.5" y="4" width="1.5" height="10" fill="#e6e6e6"/></svg>
<svg class="a" style="left:971px;top:611px;" width="20" height="18" viewBox="0 0 20 18"><path d="M4 7 V14 H16 V7" fill="none" stroke="#e6e6e6" stroke-width="1.3"/><path d="M6 10 Q7 6 12 6 V3.5 L16 6.5 L12 9.5 V7.5 Q8 7.5 6 10z" fill="#e6e6e6"/></svg>
<div class="a" style="left:1232px;top:610px;width:37px;height:20px;background:#2b2b2b;border:1px solid #222;border-radius:3px"></div>
<svg class="a" style="left:1234px;top:613px;" width="16" height="14" viewBox="0 0 16 14"><path d="M1 7 L5 3 H14 V11 H5z" fill="#ddd"/><circle cx="5" cy="7" r="1.3" fill="#2b2b2b"/></svg>
<div class="t" style="left:1257px;top:614px;font-size:12px;line-height:14px;color:#999;">0</div>
<div class="a" style="left:1272px;top:610px;width:31px;height:20px;background:#2b2b2b;border:1px solid #222;border-radius:3px"></div>
<svg class="a" style="left:1272px;top:610px;" width="31" height="20" viewBox="0 0 31 20"><path d="M3 8 H6 L10 4 V16 L6 12 H3z" fill="#3ecf6a"/><path d="M12 7 Q14 10 12 13 M14 5 Q17 10 14 15" fill="none" stroke="#3ecf6a" stroke-width="1.4"/></svg>
<div class="a" style="left:1292px;top:611px;width:1px;height:18px;background:#222;"></div>
<svg class="a" style="left:1294px;top:615px;" width="7" height="10" viewBox="0 0 7 10"><path d="M1 1 L6 5 L1 9z" fill="none" stroke="#888" stroke-width="1"/></svg>
<div class="a" style="left:1307px;top:610px;width:31px;height:20px;background:#2b2b2b;border:1px solid #222;border-radius:3px"></div>
<svg class="a" style="left:1307px;top:610px;" width="31" height="20" viewBox="0 0 31 20"><rect x="1" y="1" width="19" height="18" fill="#3a3a3a"/><g transform="rotate(40 10 10)"><path d="M5.5 15 V10 A4.5 4.5 0 0 1 14.5 10 V15" fill="none" stroke="#ddd" stroke-width="2.2"/></g></svg>
<div class="a" style="left:1327px;top:611px;width:1px;height:18px;background:#222;"></div>
<svg class="a" style="left:1329px;top:615px;" width="7" height="10" viewBox="0 0 7 10"><path d="M1 1 L6 5 L1 9z" fill="none" stroke="#888" stroke-width="1"/></svg>
<div class="a" style="left:1342px;top:610px;width:31px;height:20px;background:#2b2b2b;border:1px solid #222;border-radius:3px"></div>
<svg class="a" style="left:1342px;top:610px;" width="31" height="20" viewBox="0 0 31 20"><rect x="1" y="1" width="19" height="18" fill="#3a3a3a"/><path d="M7.5 3 V17 M13.5 3 V17 M3 7.5 H18 M3 12.5 H18" stroke="#ddd" stroke-width="1.2"/></svg>
<div class="a" style="left:1362px;top:611px;width:1px;height:18px;background:#222;"></div>
<svg class="a" style="left:1364px;top:615px;" width="7" height="10" viewBox="0 0 7 10"><path d="M1 1 L6 5 L1 9z" fill="none" stroke="#888" stroke-width="1"/></svg>
<div class="a" style="left:1377px;top:610px;width:19px;height:20px;background:#2b2b2b;border:1px solid #222;border-radius:3px"></div>
<svg class="a" style="left:1377px;top:610px;" width="19" height="20" viewBox="0 0 19 20"><rect x="2" y="5" width="3.5" height="3.5" fill="#3ecf6a"/><rect x="7.5" y="4.5" width="9.5" height="6.5" fill="none" stroke="#3ecf6a" stroke-width="1.6"/><rect x="2" y="12.5" width="15" height="4" fill="#3ecf6a"/><rect x="5.5" y="12.5" width="1.5" height="4" fill="#2b2b2b"/></svg>
<div class="a" style="left:1400px;top:610px;width:19px;height:20px;background:#2b2b2b;border:1px solid #222;border-radius:3px"></div>
<svg class="a" style="left:1400px;top:610px;" width="19" height="20" viewBox="0 0 19 20"><path d="M2.5 5 H5 L9 10 L5 15 H2.5 L5.5 10z" fill="#ccc"/><path d="M7 5 L11 10 L7 15 M11 5 L15 10 L11 15" fill="none" stroke="#ccc" stroke-width="1.6"/></svg>
<div class="a" style="left:1423px;top:610px;width:31px;height:20px;background:#2b2b2b;border:1px solid #222;border-radius:3px"></div>
<svg class="a" style="left:1423px;top:610px;" width="31" height="20" viewBox="0 0 31 20"><rect x="1" y="1" width="19" height="18" fill="#3a3a3a"/><rect x="2.5" y="4.5" width="13" height="10" fill="#444" stroke="#ddd" stroke-width="1.3"/><rect x="2" y="14" width="14" height="2" fill="#ddd"/></svg>
<div class="a" style="left:1443px;top:611px;width:1px;height:18px;background:#222;"></div>
<svg class="a" style="left:1445px;top:615px;" width="7" height="10" viewBox="0 0 7 10"><path d="M1 1 L6 5 L1 9z" fill="none" stroke="#888" stroke-width="1"/></svg>
<div class="a" style="left:1458px;top:610px;width:31px;height:20px;background:#2b2b2b;border:1px solid #222;border-radius:3px"></div>
<svg class="a" style="left:1458px;top:610px;" width="31" height="20" viewBox="0 0 31 20"><rect x="1" y="1" width="19" height="18" fill="#3a3a3a"/><rect x="2.5" y="4.5" width="8" height="5.5" fill="none" stroke="#ccc" stroke-width="1"/><path d="M11.5 7 V11.5 H4.5 M13.5 9 V13.5 H6.5 M15.5 11 V15.5 H8.5" fill="none" stroke="#aaa" stroke-width="0.9"/></svg>
<div class="a" style="left:1478px;top:611px;width:1px;height:18px;background:#222;"></div>
<svg class="a" style="left:1480px;top:615px;" width="7" height="10" viewBox="0 0 7 10"><path d="M1 1 L6 5 L1 9z" fill="none" stroke="#888" stroke-width="1"/></svg>
<div class="a" style="left:1493px;top:610px;width:31px;height:20px;background:#2b2b2b;border:1px solid #222;border-radius:3px"></div>
<svg class="a" style="left:1493px;top:610px;" width="31" height="20" viewBox="0 0 31 20"><rect x="1" y="1" width="19" height="18" fill="#3a3a3a"/><rect x="2.5" y="3.5" width="9" height="9" fill="#ddd"/><rect x="7.5" y="8.5" width="9" height="8" fill="#444" stroke="#ddd" stroke-width="1.3"/></svg>
<div class="a" style="left:1513px;top:611px;width:1px;height:18px;background:#222;"></div>
<svg class="a" style="left:1515px;top:615px;" width="7" height="10" viewBox="0 0 7 10"><path d="M1 1 L6 5 L1 9z" fill="none" stroke="#888" stroke-width="1"/></svg>
<div class="a" style="left:1528px;top:610px;width:31px;height:20px;background:#2b2b2b;border:1px solid #222;border-radius:3px"></div>
<svg class="a" style="left:1528px;top:610px;" width="31" height="20" viewBox="0 0 31 20"><rect x="4.0" y="4.5" width="2.6" height="2.6" fill="#3ecf6a"/><rect x="4.0" y="9.7" width="2.6" height="2.6" fill="#3ecf6a"/><rect x="4.0" y="14.9" width="2.6" height="2.6" fill="#3ecf6a"/><rect x="6.6" y="7.1" width="2.6" height="2.6" fill="#3ecf6a"/><rect x="6.6" y="12.3" width="2.6" height="2.6" fill="#3ecf6a"/><rect x="9.2" y="4.5" width="2.6" height="2.6" fill="#3ecf6a"/><rect x="9.2" y="9.7" width="2.6" height="2.6" fill="#3ecf6a"/><rect x="9.2" y="14.9" width="2.6" height="2.6" fill="#3ecf6a"/><rect x="11.8" y="7.1" width="2.6" height="2.6" fill="#3ecf6a"/><rect x="11.8" y="12.3" width="2.6" height="2.6" fill="#3ecf6a"/><rect x="14.4" y="4.5" width="2.6" height="2.6" fill="#3ecf6a"/><rect x="14.4" y="9.7" width="2.6" height="2.6" fill="#3ecf6a"/><rect x="14.4" y="14.9" width="2.6" height="2.6" fill="#3ecf6a"/></svg>
<div class="a" style="left:1548px;top:611px;width:1px;height:18px;background:#222;"></div>
<svg class="a" style="left:1550px;top:615px;" width="7" height="10" viewBox="0 0 7 10"><path d="M1 1 L6 5 L1 9z" fill="none" stroke="#888" stroke-width="1"/></svg>
<div class="a" style="left:1563px;top:610px;width:19px;height:20px;background:#2b2b2b;border:1px solid #222;border-radius:3px"></div>
<svg class="a" style="left:1563px;top:610px;" width="19" height="20" viewBox="0 0 19 20"><circle cx="9.5" cy="10" r="4" fill="none" stroke="#ddd" stroke-width="2.6"/><rect x="8.3" y="3" width="2.4" height="3" fill="#ddd" transform="rotate(0 9.5 10)"/><rect x="8.3" y="3" width="2.4" height="3" fill="#ddd" transform="rotate(45 9.5 10)"/><rect x="8.3" y="3" width="2.4" height="3" fill="#ddd" transform="rotate(90 9.5 10)"/><rect x="8.3" y="3" width="2.4" height="3" fill="#ddd" transform="rotate(135 9.5 10)"/><rect x="8.3" y="3" width="2.4" height="3" fill="#ddd" transform="rotate(180 9.5 10)"/><rect x="8.3" y="3" width="2.4" height="3" fill="#ddd" transform="rotate(225 9.5 10)"/><rect x="8.3" y="3" width="2.4" height="3" fill="#ddd" transform="rotate(270 9.5 10)"/><rect x="8.3" y="3" width="2.4" height="3" fill="#ddd" transform="rotate(315 9.5 10)"/></svg>
<div class="a" style="left:1593px;top:85px;width:321px;height:22px;background:#1d1d1d;"></div>
<div class="a" style="left:1593px;top:85px;width:41px;height:22px;background:#444;border-radius:4px 4px 0 0"></div>
<div class="a" style="left:1634px;top:85px;width:69px;height:22px;background:#262626;border-radius:4px 4px 0 0"></div>
<div class="t" style="left:1599px;top:90px;font-size:12px;line-height:14px;color:#e2e2e2;">Color</div>
<div class="t" style="left:1640px;top:90px;font-size:12px;line-height:14px;color:#e2e2e2;">Add Layers</div>
<div class="a" style="left:1593px;top:107px;width:321px;height:428px;background:#464646;"></div>
<div class="a" style="left:1900px;top:107px;width:14px;height:428px;background:#3a3a3a;"></div>
<div class="a" style="left:1902px;top:108px;width:10px;height:390px;background:#525252;border-radius:5px"></div>
<div class="a" style="left:1645.3px;top:119.6px;width:200px;height:200px;border-radius:50%;background:conic-gradient(from 90deg,#f00,#f0f 60deg,#00f 120deg,#0ff 180deg,#0f0 240deg,#ff0 300deg,#f00 360deg)"></div>
<div class="a" style="left:1670.7px;top:145px;width:149.2px;height:149.2px;border-radius:50%;background:#464646"></div>
<div class="a" style="left:1702px;top:176px;width:90px;height:90px;background:linear-gradient(to right,#000,rgba(0,0,0,0)),linear-gradient(to bottom,#fff,#f00)"></div>
<svg class="a" style="left:1738px;top:169px;" width="14" height="14" viewBox="0 0 14 14"><circle cx="7" cy="7" r="6" fill="none" stroke="#ddd" stroke-width="1.1"/></svg>
<svg class="a" style="left:1826px;top:213px;" width="14" height="14" viewBox="0 0 14 14"><circle cx="7" cy="7" r="6" fill="none" stroke="#fff" stroke-width="1.1"/></svg>
<div class="a" style="left:1600px;top:333px;width:22px;height:22px;background:#7a7a7a;border-radius:3px"></div>
<div class="t" style="left:1625px;top:338px;font-size:12px;line-height:14px;color:#e6e6e6;">Gray</div>
<div class="a" style="left:1871px;top:333px;width:22px;height:22px;background:#262626;border:1px solid #1f1f1f;border-radius:3px"></div>
<svg class="a" style="left:1875px;top:337px;" width="14" height="14" viewBox="0 0 14 14"><path d="M2 12 L8 6" stroke="#bbb" stroke-width="1.5"/><path d="M7 4.5 L10 1.5 L12.5 4 L9.5 7z" fill="#ddd"/></svg>
<div class="a" style="left:1600px;top:360px;width:50px;height:18px;background:#3d3d3d;border:1px solid #2d2d2d;border-radius:3px"></div>
<div class="t" style="left:1603px;top:363px;font-size:12px;line-height:14px;color:#e6e6e6;">Hex</div>
<svg class="a" style="left:1634px;top:366px;" width="10" height="6" viewBox="0 0 10 6"><path d="M0.5 0.5 L5 5 L9.5 0.5" stroke="#bbb" fill="none" stroke-width="1"/></svg>
<div class="a" style="left:1653px;top:358px;width:240px;height:22px;background:#2f2f2f;border-radius:3px"></div>
<div class="t" style="left:1659px;top:364px;font-size:11px;line-height:13px;color:#666;">#</div>
<div class="t" style="left:1670px;top:363px;font-size:12px;line-height:14px;color:#e6e6e6;">7a7a7a</div>
<div class="a" style="left:1600px;top:390px;width:234px;height:4px;background:#e0e0e0;border-radius:2px"></div>
<svg class="a" style="left:1828px;top:386px;" width="12" height="12" viewBox="0 0 12 12"><circle cx="6" cy="6" r="5.5" fill="#6fcfb2"/><circle cx="6" cy="6" r="2" fill="#4a9e86"/></svg>
<div class="a" style="left:1849px;top:384px;width:44px;height:16px;background:#2f2f2f;border-radius:3px"></div>
<div class="t" style="left:1853px;top:386px;font-size:12px;line-height:14px;color:#666;">A</div>
<div class="t" style="left:1866px;top:386px;font-size:12px;line-height:14px;color:#e6e6e6;">255</div>
<div class="a" style="left:1597px;top:406px;width:299px;height:22px;background:#232323;border-radius:3px"></div>
<div class="a" style="left:1599px;top:407px;width:148px;height:21px;background:#444;border-radius:4px 4px 0 0"></div>
<div class="t" style="left:1599px;top:411px;width:148px;text-align:center;font-size:12px;line-height:14px;color:#e6e6e6">Swatches</div>
<div class="t" style="left:1747px;top:411px;width:148px;text-align:center;font-size:12px;line-height:14px;color:#bdbdbd">Generator</div>
<div class="a" style="left:1597px;top:431px;width:258px;height:18px;background:#4d4d4d;border-radius:3px"></div>
<div class="a" style="left:1857px;top:431px;width:38px;height:18px;background:#4d4d4d;border-radius:3px"></div>
<div class="a" style="left:1599px;top:432px;width:62px;height:16px;background:#2a2a2a;border-radius:3px"></div>
<svg class="a" style="left:1604px;top:434px;" width="14" height="12" viewBox="0 0 14 12"><rect x="1" y="1" width="1.8" height="10" fill="#3ecf6a"/><rect x="4.5" y="1" width="1.8" height="10" fill="#3ecf6a"/><path d="M8 1 L11.5 11" stroke="#3ecf6a" stroke-width="1.8"/></svg>
<div class="t" style="left:1621px;top:434px;font-size:12px;line-height:14px;color:#e6e6e6;">Library</div>
<svg class="a" style="left:1670px;top:434px;" width="13" height="12" viewBox="0 0 13 12"><rect x="0.5" y="1.5" width="11" height="9" fill="#ccc"/><rect x="0.5" y="0" width="5" height="2" fill="#ccc"/><rect x="3" y="4" width="7" height="1" fill="#3b3b3b"/><rect x="3" y="6" width="7" height="1" fill="#3b3b3b"/></svg>
<div class="t" style="left:1686px;top:434px;font-size:12px;line-height:14px;color:#e6e6e6;">Project</div>
<svg class="a" style="left:1739px;top:434px;" width="10" height="12" viewBox="0 0 10 12"><path d="M0.5 0.5 H6 L9.5 4 V11.5 H0.5z" fill="none" stroke="#ccc" stroke-width="1"/></svg>
<div class="t" style="left:1752px;top:434px;font-size:12px;line-height:14px;color:#e6e6e6;">Scene</div>
<svg class="a" style="left:1801px;top:434px;" width="12" height="12" viewBox="0 0 12 12"><path d="M1 1 H11 V7 L7 11 H1z" fill="none" stroke="#ccc" stroke-width="1.1"/></svg>
<div class="t" style="left:1816px;top:434px;font-size:12px;line-height:14px;color:#e6e6e6;">Labels</div>
<div class="a" style="left:1859px;top:432px;width:16px;height:17px;background:#262626;border-radius:3px"></div>
<svg class="a" style="left:1862px;top:436px;" width="10" height="10" viewBox="0 0 10 10"><rect x="0" y="0" width="4" height="4" fill="#3ecf6a"/><rect x="6" y="0" width="4" height="4" fill="#3ecf6a"/><rect x="0" y="6" width="4" height="4" fill="#3ecf6a"/><rect x="6" y="6" width="4" height="4" fill="#3ecf6a"/></svg>
<svg class="a" style="left:1879px;top:435px;" width="12" height="10" viewBox="0 0 12 10"><rect x="0" y="0" width="11" height="1.3" fill="#ccc"/><rect x="0" y="4" width="11" height="1.3" fill="#ccc"/><rect x="0" y="8" width="11" height="1.3" fill="#ccc"/></svg>
<div class="a" style="left:1597px;top:453px;width:276px;height:16px;background:#4d4d4d;border:1px solid #3a3a3a;border-radius:3px"></div>
<div class="t" style="left:1600px;top:455px;font-size:12px;line-height:14px;color:#e6e6e6;">Bright</div>
<svg class="a" style="left:1860px;top:458px;" width="10" height="6" viewBox="0 0 10 6"><path d="M0.5 0.5 L5 5 L9.5 0.5" stroke="#bbb" fill="none" stroke-width="1"/></svg>
<div class="a" style="left:1881px;top:460px;width:2px;height:2px;background:#ccc;"></div>
<div class="a" style="left:1886px;top:460px;width:2px;height:2px;background:#ccc;"></div>
<div class="a" style="left:1891px;top:460px;width:2px;height:2px;background:#ccc;"></div>
<div class="a" style="left:1597px;top:469px;width:298px;height:66px;background:#2a2a2a;"></div>
<div class="a" style="left:1600px;top:472px;width:18px;height:18px;background:#a96bc9;border-radius:3px"></div>
<div class="a" style="left:1622px;top:472px;width:18px;height:18px;background:#0fc7ef;border-radius:3px"></div>
<div class="a" style="left:1644px;top:472px;width:18px;height:18px;background:#f3e000;border-radius:3px"></div>
<div class="a" style="left:1666px;top:472px;width:18px;height:18px;background:#f07a10;border-radius:3px"></div>
<div class="a" style="left:1688px;top:472px;width:18px;height:18px;background:#ee1010;border-radius:3px"></div>
<div class="a" style="left:1593px;top:535px;width:321px;height:6px;background:#121212;"></div>
<div class="a" style="left:1593px;top:541px;width:321px;height:22px;background:#1d1d1d;"></div>
<div class="a" style="left:1593px;top:541px;width:38px;height:22px;background:#444;border-radius:4px 4px 0 0"></div>
<div class="t" style="left:1598px;top:546px;font-size:12px;line-height:14px;color:#e2e2e2;">Align</div>
<div class="a" style="left:1593px;top:563px;width:321px;height:68px;background:#464646;"></div>
<div class="t" style="left:1601px;top:576px;font-size:12px;line-height:14px;color:#e6e6e6;">Alignment</div>
<div class="t" style="left:1601px;top:604px;font-size:12px;line-height:14px;color:#e6e6e6;">Distribution</div>
<div class="a" style="left:1790px;top:573px;width:54px;height:18px;background:#2e2e2e;border:1px solid #222;border-radius:4px"></div>
<svg class="a" style="left:1790px;top:573px;" width="18" height="18" viewBox="0 0 18 18"><rect x="3" y="3" width="1.3" height="12" fill="#ddd"/><rect x="5" y="6" width="6" height="2" fill="#ddd"/><rect x="5" y="10" width="9" height="2" fill="#ddd"/></svg>
<div class="a" style="left:1808px;top:574px;width:1px;height:16px;background:#222;"></div>
<svg class="a" style="left:1808px;top:573px;" width="18" height="18" viewBox="0 0 18 18"><rect x="8.5" y="3" width="1.3" height="12" fill="#ddd"/><rect x="5" y="6" width="8" height="2" fill="#ddd"/><rect x="3" y="10" width="12" height="2" fill="#ddd"/></svg>
<div class="a" style="left:1826px;top:574px;width:1px;height:16px;background:#222;"></div>
<svg class="a" style="left:1826px;top:573px;" width="18" height="18" viewBox="0 0 18 18"><rect x="14" y="3" width="1.3" height="12" fill="#ddd"/><rect x="7" y="6" width="6" height="2" fill="#ddd"/><rect x="4" y="10" width="9" height="2" fill="#ddd"/></svg>
<div class="a" style="left:1852px;top:573px;width:54px;height:18px;background:#2e2e2e;border:1px solid #222;border-radius:4px"></div>
<svg class="a" style="left:1852px;top:573px;" width="18" height="18" viewBox="0 0 18 18"><rect x="3" y="3" width="12" height="1.3" fill="#ddd"/><rect x="6" y="5" width="2" height="8" fill="#ddd"/><rect x="10" y="5" width="2" height="5" fill="#ddd"/></svg>
<div class="a" style="left:1870px;top:574px;width:1px;height:16px;background:#222;"></div>
<svg class="a" style="left:1870px;top:573px;" width="18" height="18" viewBox="0 0 18 18"><rect x="3" y="8.5" width="12" height="1.3" fill="#ddd"/><rect x="6" y="4" width="2" height="10" fill="#ddd"/><rect x="10" y="5" width="2" height="8" fill="#ddd"/></svg>
<div class="a" style="left:1888px;top:574px;width:1px;height:16px;background:#222;"></div>
<svg class="a" style="left:1888px;top:573px;" width="18" height="18" viewBox="0 0 18 18"><rect x="3" y="14" width="12" height="1.3" fill="#ddd"/><rect x="6" y="6" width="2" height="7" fill="#ddd"/><rect x="10" y="3" width="2" height="10" fill="#ddd"/></svg>
<div class="a" style="left:1790px;top:601px;width:54px;height:18px;background:#2e2e2e;border:1px solid #222;border-radius:4px"></div>
<svg class="a" style="left:1790px;top:601px;" width="18" height="18" viewBox="0 0 18 18"><rect x="3" y="3" width="1.3" height="12" fill="#ddd"/><rect x="8" y="5" width="2" height="8" fill="#ddd"/><rect x="14" y="3" width="1.3" height="12" fill="#ddd"/></svg>
<div class="a" style="left:1808px;top:602px;width:1px;height:16px;background:#222;"></div>
<svg class="a" style="left:1808px;top:601px;" width="18" height="18" viewBox="0 0 18 18"><rect x="3" y="3" width="12" height="1.3" fill="#ddd"/><rect x="5" y="8" width="8" height="2" fill="#ddd"/><rect x="3" y="14" width="12" height="1.3" fill="#ddd"/></svg>
<div class="a" style="left:1826px;top:602px;width:1px;height:16px;background:#222;"></div>
<svg class="a" style="left:1826px;top:601px;" width="18" height="18" viewBox="0 0 18 18"><path d="M3 7 V3 H7 M11 15 H15 V11" fill="none" stroke="#ddd" stroke-width="1" stroke-dasharray="1.5 1"/><rect x="6" y="9" width="2" height="3" fill="#ddd"/><rect x="10" y="6" width="2" height="3" fill="#ddd"/></svg>
<div class="a" style="left:1914px;top:85px;width:6px;height:945px;background:#1f1f1f;"></div>
<div class="a" style="left:494px;top:631px;width:1420px;height:6px;background:#121212;"></div>
<div class="a" style="left:494px;top:637px;width:1420px;height:22px;background:#1d1d1d;"></div>
<div class="a" style="left:494px;top:637px;width:89px;height:22px;background:#444;border-radius:4px 4px 0 0"></div>
<div class="a" style="left:584px;top:637px;width:100px;height:22px;background:#262626;border-radius:4px 4px 0 0"></div>
<div class="a" style="left:685px;top:637px;width:107px;height:22px;background:#262626;border-radius:4px 4px 0 0"></div>
<div class="t" style="left:500px;top:642px;font-size:12px;line-height:14px;color:#e2e2e2;;transform:scaleX(0.9745);transform-origin:0 0">Scene Window</div>
<div class="t" style="left:589px;top:642px;font-size:12px;line-height:14px;color:#e2e2e2;">JavaScript Editor</div>
<div class="t" style="left:690px;top:642px;font-size:12px;line-height:14px;color:#e2e2e2;;transform:scaleX(0.9705);transform-origin:0 0">Dependency Graph</div>
<div class="a" style="left:494px;top:659px;width:699px;height:341px;background:#2a2a2a;"></div>
<div class="a" style="left:1193px;top:659px;width:7px;height:341px;background:#222;"></div>
<div class="t" style="left:783px;top:664px;font-size:12px;line-height:14px;color:#c8c8c8;;transform:scaleX(0.9789);transform-origin:0 0">Jumping Text Coloring</div>
<svg class="a" style="left:1186px;top:666px;" width="10" height="10" viewBox="0 0 10 10"><path d="M1 1 L9 9 M9 1 L1 9" stroke="#bbb" stroke-width="1.1"/></svg>
<div class="a" style="left:494px;top:681px;width:699px;height:22px;background:#3a3a3a;"></div>
<div class="a" style="left:496px;top:683px;width:489px;height:20px;background:#232323;border-radius:10px"></div>
<svg class="a" style="left:499px;top:686px;" width="14" height="14" viewBox="0 0 14 14"><circle cx="5.5" cy="5.5" r="4.3" fill="none" stroke="#ddd" stroke-width="1.2"/><path d="M8.5 8.5 L12.5 12.5" stroke="#ddd" stroke-width="2"/></svg>
<div class="t" style="left:520px;top:687px;font-size:12px;line-height:14px;color:#8b8b8b;;transform:scaleX(0.9469);transform-origin:0 0">Enter a layer name</div>
<div class="a" style="left:987px;top:683px;width:19px;height:19px;background:#2b2b2b;border:1px solid #222;border-radius:4px"></div>
<svg class="a" style="left:989px;top:685px;" width="16" height="16" viewBox="0 0 16 16"><path d="M8 2.5 V13 M2.5 7.8 H13.5" stroke="#eee" stroke-width="1.8"/><path d="M13 15 l2.5 -2.5 v2.5z" fill="#49c99a"/></svg>
<div class="a" style="left:1031px;top:683px;width:19px;height:19px;background:#2b2b2b;border:1px solid #222;border-radius:4px"></div>
<div class="a" style="left:1053px;top:683px;width:19px;height:19px;background:#2b2b2b;border:1px solid #222;border-radius:4px"></div>
<div class="a" style="left:1075px;top:683px;width:19px;height:19px;background:#2b2b2b;border:1px solid #222;border-radius:4px"></div>
<svg class="a" style="left:1031px;top:683px;" width="19" height="19" viewBox="0 0 19 19"><circle cx="11.5" cy="7" r="4" fill="#ddd"/><path d="M4 14 A6 6 0 0 1 8.5 6" fill="none" stroke="#666" stroke-width="1.5"/><path d="M5.5 16 A6 6 0 0 1 10 8" fill="none" stroke="#555" stroke-width="1.5"/></svg>
<svg class="a" style="left:1053px;top:683px;" width="19" height="19" viewBox="0 0 19 19"><circle cx="5" cy="5" r="1.2" fill="#ddd"/><circle cx="12" cy="5" r="1.2" fill="#ddd"/><circle cx="5" cy="11" r="1.2" fill="#ddd"/><path d="M11.5 8 V15 M8 11.5 H15" stroke="#eee" stroke-width="1.6"/><path d="M15.5 17 l2 -2 v2z" fill="#49c99a"/></svg>
<svg class="a" style="left:1075px;top:683px;" width="19" height="19" viewBox="0 0 19 19"><path d="M3 5 H16 M3 9.5 H16 M3 14 H16" stroke="#ccc" stroke-width="1"/><circle cx="8" cy="5" r="1.8" fill="#2b2b2b" stroke="#ccc" stroke-width="1"/><circle cx="11" cy="9.5" r="1.8" fill="#2b2b2b" stroke="#ccc" stroke-width="1"/><circle cx="8" cy="14" r="1.8" fill="#2b2b2b" stroke="#ccc" stroke-width="1"/><path d="M16 17 l2 -2 v2z" fill="#49c99a"/></svg>
<div class="a" style="left:1100px;top:682px;width:91px;height:21px;background:#262626;border-radius:2px"></div>
<div class="a" style="left:1100px;top:703px;width:91px;height:3px;background:#3a3a3a;"></div>
<div class="t" style="left:1102px;top:687px;font-size:12px;line-height:14px;color:#555;">F</div>
<div class="t" style="left:1114px;top:687px;font-size:12px;line-height:14px;color:#e6e6e6;">0</div>
<div class="a" style="left:494px;top:703px;width:699px;height:20px;background:#454545;"></div>
<div class="a" style="left:1100px;top:703px;width:91px;height:3px;background:#3a3a3a;"></div>
<svg class="a" style="left:499px;top:708px;" width="12" height="13" viewBox="0 0 12 13"><path d="M3 6 V4 A3 3 0 0 1 9 4 V6" fill="none" stroke="#ccc" stroke-width="1.3"/><rect x="1.5" y="6" width="9" height="6.5" fill="#ccc"/><rect x="5.2" y="8" width="1.6" height="2.5" fill="#454545"/></svg>
<svg class="a" style="left:516px;top:710px;" width="15" height="10" viewBox="0 0 15 10"><path d="M1 5 Q7.5 -1 14 5 Q7.5 11 1 5z" fill="none" stroke="#ccc" stroke-width="1.1"/><circle cx="7.5" cy="5" r="2" fill="#ccc"/></svg>
<svg class="a" style="left:536px;top:707px;" width="14" height="15" viewBox="0 0 14 15"><path d="M7 1 L13 4.3 V11 L7 14 L1 11 V4.3z M1 4.3 L7 7.5 L13 4.3 M7 7.5 V14" fill="none" stroke="#ccc" stroke-width="1"/></svg>
<svg class="a" style="left:555px;top:708px;" width="15" height="13" viewBox="0 0 15 13"><path d="M1 4.5 H4 L8 1 V12 L4 8.5 H1z" fill="#ccc"/><path d="M10 4 Q12 6.5 10 9 M12 2 Q15.5 6.5 12 11" fill="none" stroke="#ccc" stroke-width="1.2"/></svg>
<svg class="a" style="left:574px;top:707px;" width="14" height="15" viewBox="0 0 14 15"><path d="M2 14 L8.5 7.5" stroke="#aaa" stroke-width="1.5"/><path d="M7.5 5.5 L10.5 2.5 L12.5 4.5 L9.5 7.5z" fill="#ccc"/></svg>
<svg class="a" style="left:593px;top:709px;" width="15" height="11" viewBox="0 0 15 11"><path d="M1 5.5 L5 1 H14 V10 H5z" fill="#ccc"/><circle cx="5.5" cy="5.5" r="1.4" fill="#454545"/></svg>
<div class="t" style="left:649px;top:708px;font-size:12px;line-height:14px;color:#e6e6e6;">Name</div>
<div class="a" style="left:494px;top:723px;width:683px;height:44px;background:#323232;"></div>
<div class="a" style="left:1177px;top:723px;width:16px;height:237px;background:#2a2a2a;"></div>
<div class="a" style="left:1181px;top:724px;width:10px;height:236px;background:#3e3e3e;border-radius:5px"></div>
<div class="a" style="left:496px;top:725px;width:18px;height:18px;background:#282828;border-radius:3px"></div>
<div class="a" style="left:515px;top:725px;width:18px;height:18px;background:#282828;border-radius:3px"></div>
<svg class="a" style="left:518px;top:728px;" width="12" height="12" viewBox="0 0 12 12"><circle cx="6" cy="6" r="5" fill="none" stroke="#ccc" stroke-width="1.1"/><path d="M3.5 6 L5.5 8 L10.5 2.5" fill="none" stroke="#ccc" stroke-width="1.3"/></svg>
<div class="a" style="left:573px;top:726px;width:16px;height:16px;background:#6890e6;border-radius:3px"></div>
<svg class="a" style="left:593px;top:729px;" width="15" height="11" viewBox="0 0 15 11"><path d="M1 5.5 L5 1 H14 V10 H5z" fill="#ccc"/><circle cx="5.5" cy="5.5" r="1.4" fill="#323232"/></svg>
<div class="a" style="left:610px;top:726px;width:12px;height:16px;background:#2d2d2d;border-radius:2px"></div>
<svg class="a" style="left:611px;top:731px;" width="10" height="6" viewBox="0 0 10 6"><path d="M0.5 0.5 L5 5 L9.5 0.5" stroke="#777" fill="none" stroke-width="1"/></svg>
<div class="a" style="left:627px;top:726px;width:15px;height:16px;background:#2b2b2b;border-radius:2px"></div>
<svg class="a" style="left:630px;top:730px;" width="8" height="8" viewBox="0 0 8 8"><circle cx="4" cy="4" r="3" fill="#ddd"/></svg>
<svg class="a" style="left:647px;top:726px;" width="16" height="16" viewBox="0 0 16 16"><circle cx="8" cy="8" r="7" fill="none" stroke="#ccc" stroke-width="1"/><rect x="0" y="5" width="16" height="5.5" fill="#323232"/><text x="8" y="10" font-size="7.5" font-family="Liberation Sans" fill="#9fd3f5" text-anchor="middle">abc</text><rect x="2" y="10.5" width="12" height="0.8" fill="#9fd3f5"/></svg>
<div class="t" style="left:667px;top:728px;font-size:12px;line-height:14px;color:#e6e6e6;">String Manipulator [Cavalry Typing Text 01]</div>
<svg class="a" style="left:634px;top:745px;" width="12" height="12" viewBox="0 0 12 12"><path d="M1 0 V10 H11" fill="none" stroke="#ccc" stroke-width="1" stroke-dasharray="1 1"/></svg>
<div class="t" style="left:648px;top:750px;font-size:12px;line-height:14px;color:#e6e6e6;;transform:scaleX(0.9554);transform-origin:0 0">Resize String.Percentage</div>
<div class="a" style="left:1139px;top:726px;width:21px;height:16px;background:#2a2a2a;border-radius:3px"></div>
<svg class="a" style="left:1140px;top:727px;" width="20" height="14" viewBox="0 0 20 14"><path d="M6 2.5 L2 7 L6 11.5 H8 V2.5z" fill="#777"/><rect x="10.5" y="0.5" width="9" height="13" fill="none" stroke="#a048b8" stroke-width="1"/><path d="M12.5 2.5 H14.5 L18 7 L14.5 11.5 H12.5z" fill="#d25ee6"/></svg>
<svg class="a" style="left:1165px;top:729px;" width="11" height="11" viewBox="0 0 11 11"><circle cx="5.5" cy="5.5" r="4.4" fill="none" stroke="#666" stroke-width="1.1"/></svg>
<div class="a" style="left:1082px;top:748px;width:83px;height:16px;background:#262626;border-radius:2px"></div>
<div class="a" style="left:1165px;top:748px;width:11px;height:16px;background:#2e2e2e;"></div>
<div class="t" style="left:1084px;top:751px;font-size:11px;line-height:13px;color:#777;">%</div>
<div class="t" style="left:1098px;top:750px;font-size:12px;line-height:14px;color:#e6e6e6;">0.0</div>
<svg class="a" style="left:1151px;top:750px;" width="12" height="12" viewBox="0 0 12 12"><path d="M6 1 L11 6 L6 11 L1 6z" fill="#3ecf6a"/></svg>
<svg class="a" style="left:1166px;top:751px;" width="7" height="10" viewBox="0 0 7 10"><path d="M0.5 1 H2.5 L6 5 L2.5 9 H0.5z" fill="#777"/></svg>
<div class="a" style="left:494px;top:767px;width:683px;height:22px;background:#46404f;"></div>
<div class="a" style="left:1177px;top:767px;width:0px;height:0px;background:#000;"></div>
<div class="a" style="left:496px;top:769px;width:18px;height:18px;background:#282828;border-radius:3px"></div>
<div class="a" style="left:515px;top:769px;width:18px;height:18px;background:#282828;border-radius:3px"></div>
<div class="a" style="left:534px;top:769px;width:18px;height:18px;background:#282828;border-radius:3px"></div>
<svg class="a" style="left:518px;top:774px;" width="14" height="10" viewBox="0 0 14 10"><path d="M1 5 Q7 -1 13 5 Q7 11 1 5z" fill="none" stroke="#ccc" stroke-width="1.1"/><circle cx="7" cy="5" r="2" fill="#ccc"/></svg>
<div class="a" style="left:573px;top:770px;width:16px;height:16px;background:#b98cf5;border-radius:3px"></div>
<svg class="a" style="left:593px;top:773px;" width="15" height="11" viewBox="0 0 15 11"><path d="M1 5.5 L5 1 H14 V10 H5z" fill="#ccc"/><circle cx="5.5" cy="5.5" r="1.4" fill="#46404f"/></svg>
<svg class="a" style="left:647px;top:770px;" width="16" height="16" viewBox="0 0 16 16"><rect x="1.5" y="1.5" width="13" height="13" fill="none" stroke="#ddd" stroke-width="1" stroke-dasharray="2 1.5"/><rect x="0" y="0" width="3" height="3" fill="#ddd"/><rect x="13" y="0" width="3" height="3" fill="#ddd"/><rect x="0" y="13" width="3" height="3" fill="#ddd"/><rect x="13" y="13" width="3" height="3" fill="#ddd"/><path d="M4.5 4.5 H11.5 M8 4.5 V12" stroke="#e5cf6a" stroke-width="2"/></svg>
<div class="t" style="left:667px;top:772px;font-size:12px;line-height:14px;color:#e6e6e6;;transform:scaleX(0.9756);transform-origin:0 0">Cavalry Typing Text 01</div>
<div class="a" style="left:1139px;top:772px;width:21px;height:14px;background:#2a2a2a;border-radius:3px"></div>
<svg class="a" style="left:1140px;top:772px;" width="20" height="14" viewBox="0 0 20 14"><path d="M6 2.5 L2 7 L6 11.5 H8 V2.5z" fill="#d8bb6e"/><rect x="9.5" y="1" width="1" height="12" fill="#222"/><path d="M12.5 2.5 H14.5 L18 7 L14.5 11.5 H12.5z" fill="#777"/></svg>
<svg class="a" style="left:1165px;top:773px;" width="11" height="11" viewBox="0 0 11 11"><circle cx="5.5" cy="5.5" r="4.4" fill="none" stroke="#666" stroke-width="1.1"/></svg>
<div class="a" style="left:1194px;top:835px;width:2px;height:1.5px;background:#aaa;"></div>
<div class="a" style="left:1194px;top:838px;width:2px;height:1.5px;background:#aaa;"></div>
<div class="a" style="left:1194px;top:841px;width:2px;height:1.5px;background:#aaa;"></div>
<div class="a" style="left:1194px;top:844px;width:2px;height:1.5px;background:#aaa;"></div>
<div class="a" style="left:1194px;top:847px;width:2px;height:1.5px;background:#aaa;"></div>
<div class="a" style="left:494px;top:962px;width:686px;height:14px;background:#2a2a2a;"></div>
<div class="a" style="left:495px;top:964px;width:683px;height:10px;background:#474747;border-radius:5px"></div>
<div class="a" style="left:1180px;top:962px;width:13px;height:14px;background:#2f2f2f;"></div>
<div class="a" style="left:494px;top:976px;width:699px;height:22px;background:#474747;"></div>
<div class="a" style="left:497px;top:977px;width:20px;height:20px;background:#2e2e2e;border:1px solid #222;border-radius:4px"></div>
<svg class="a" style="left:499px;top:981px;" width="16" height="12" viewBox="0 0 16 12"><path d="M1 6 L5 1.5 H14.5 V10.5 H5z" fill="#ccc"/><circle cx="5.5" cy="6" r="1.5" fill="#2e2e2e"/></svg>
<div class="t" style="left:521px;top:981px;font-size:12px;line-height:14px;color:#e6e6e6;;transform:scaleX(0.9506);transform-origin:0 0">1 selected</div>
<div class="a" style="left:984px;top:977px;width:20px;height:19px;background:#2e2e2e;border:1px solid #222;border-radius:4px"></div>
<svg class="a" style="left:987px;top:980px;" width="14" height="13" viewBox="0 0 14 13"><rect x="1.5" y="1.5" width="11" height="10" fill="none" stroke="#ccc" stroke-width="1.2"/><circle cx="7" cy="6.5" r="1.5" fill="#ccc"/></svg>
<div class="a" style="left:1008px;top:978px;width:182px;height:18px;background:#555;border-radius:4px"></div>
<div class="a" style="left:1008px;top:978px;width:86px;height:18px;background:#272727;border-radius:4px"></div>
<svg class="a" style="left:1013px;top:981px;" width="14" height="12" viewBox="0 0 14 12"><rect x="1" y="1" width="11" height="1.8" fill="#3ecf6a"/><rect x="3" y="5" width="6" height="1.8" fill="#3ecf6a"/><rect x="2" y="9" width="10" height="1.8" fill="#3ecf6a"/></svg>
<div class="t" style="left:1030px;top:981px;font-size:12px;line-height:14px;color:#e6e6e6;">Time Editor</div>
<svg class="a" style="left:1101px;top:980px;" width="14" height="15" viewBox="0 0 14 15"><path d="M2 1 V13 H13" fill="none" stroke="#aaa" stroke-width="0.9"/><path d="M2 12 L11 5" stroke="#aaa" stroke-width="0.9"/></svg>
<div class="t" style="left:1119px;top:981px;font-size:12px;line-height:14px;color:#e6e6e6;">Graph Editor</div>
<div class="a" style="left:1097px;top:678px;width:98px;height:32px;background:transparent;border:3px solid #b9ec1c"></div>
<div class="a" style="left:1078px;top:743px;width:100px;height:29px;background:transparent;border:3px solid #b9ec1c"></div>
<div class="a" style="left:623px;top:722px;width:310px;height:49px;background:transparent;border:3px solid #b9ec1c"></div>
<div class="a" style="left:1200px;top:659px;width:714px;height:341px;background:#252525;"></div>
<div class="a" style="left:1204px;top:661px;width:705px;height:20px;background:#454545;border-radius:4px 4px 0 0"></div>
<div class="t" style="left:1204px;top:664px;width:683px;text-align:center;font-size:12px;line-height:14px;color:#e6e6e6">Jumping Text Coloring 1</div>
<svg class="a" style="left:1891px;top:666px;" width="10" height="10" viewBox="0 0 10 10"><path d="M1 1 L9 9 M9 1 L1 9" stroke="#aaa" stroke-width="1.1"/></svg>
<div class="a" style="left:1197px;top:681px;width:717px;height:24px;background:#232323;"></div>
<svg class="a" style="left:1197px;top:681px;" width="717" height="24" viewBox="0 0 717 24"><rect x="9.50" y="16" width="1" height="8" fill="#999"/><rect x="21.16" y="20" width="1" height="4" fill="#888"/><rect x="32.82" y="20" width="1" height="4" fill="#888"/><rect x="44.48" y="20" width="1" height="4" fill="#888"/><rect x="56.14" y="20" width="1" height="4" fill="#888"/><rect x="67.80" y="16" width="1" height="8" fill="#999"/><rect x="79.46" y="20" width="1" height="4" fill="#888"/><rect x="91.12" y="20" width="1" height="4" fill="#888"/><rect x="102.78" y="20" width="1" height="4" fill="#888"/><rect x="114.44" y="20" width="1" height="4" fill="#888"/><rect x="126.10" y="16" width="1" height="8" fill="#999"/><rect x="137.76" y="20" width="1" height="4" fill="#888"/><rect x="149.42" y="20" width="1" height="4" fill="#888"/><rect x="161.08" y="20" width="1" height="4" fill="#888"/><rect x="172.74" y="20" width="1" height="4" fill="#888"/><rect x="184.40" y="16" width="1" height="8" fill="#999"/><rect x="196.06" y="20" width="1" height="4" fill="#888"/><rect x="207.72" y="20" width="1" height="4" fill="#888"/><rect x="219.38" y="20" width="1" height="4" fill="#888"/><rect x="231.04" y="20" width="1" height="4" fill="#888"/><rect x="242.70" y="16" width="1" height="8" fill="#999"/><rect x="254.36" y="20" width="1" height="4" fill="#888"/><rect x="266.02" y="20" width="1" height="4" fill="#888"/><rect x="277.68" y="20" width="1" height="4" fill="#888"/><rect x="289.34" y="20" width="1" height="4" fill="#888"/><rect x="301.00" y="16" width="1" height="8" fill="#999"/><rect x="312.66" y="20" width="1" height="4" fill="#888"/><rect x="324.32" y="20" width="1" height="4" fill="#888"/><rect x="335.98" y="20" width="1" height="4" fill="#888"/><rect x="347.64" y="20" width="1" height="4" fill="#888"/><rect x="359.30" y="16" width="1" height="8" fill="#999"/><rect x="370.96" y="20" width="1" height="4" fill="#888"/><rect x="382.62" y="20" width="1" height="4" fill="#888"/><rect x="394.28" y="20" width="1" height="4" fill="#888"/><rect x="405.94" y="20" width="1" height="4" fill="#888"/><rect x="417.60" y="16" width="1" height="8" fill="#999"/><rect x="429.26" y="20" width="1" height="4" fill="#888"/><rect x="440.92" y="20" width="1" height="4" fill="#888"/><rect x="452.58" y="20" width="1" height="4" fill="#888"/><rect x="464.24" y="20" width="1" height="4" fill="#888"/><rect x="475.90" y="16" width="1" height="8" fill="#999"/><rect x="487.56" y="20" width="1" height="4" fill="#888"/><rect x="499.22" y="20" width="1" height="4" fill="#888"/><rect x="510.88" y="20" width="1" height="4" fill="#888"/><rect x="522.54" y="20" width="1" height="4" fill="#888"/><rect x="534.20" y="16" width="1" height="8" fill="#999"/><rect x="545.86" y="20" width="1" height="4" fill="#888"/><rect x="557.52" y="20" width="1" height="4" fill="#888"/><rect x="569.18" y="20" width="1" height="4" fill="#888"/><rect x="580.84" y="20" width="1" height="4" fill="#888"/><rect x="592.50" y="16" width="1" height="8" fill="#999"/><rect x="604.16" y="20" width="1" height="4" fill="#888"/><rect x="615.82" y="20" width="1" height="4" fill="#888"/><rect x="627.48" y="20" width="1" height="4" fill="#888"/><rect x="639.14" y="20" width="1" height="4" fill="#888"/><rect x="650.80" y="16" width="1" height="8" fill="#999"/><rect x="662.46" y="20" width="1" height="4" fill="#888"/><rect x="674.12" y="20" width="1" height="4" fill="#888"/><rect x="685.78" y="20" width="1" height="4" fill="#888"/><rect x="697.44" y="20" width="1" height="4" fill="#888"/><rect x="709.10" y="16" width="1" height="8" fill="#999"/></svg>
<div class="t" style="left:1175.0px;top:683px;width:60px;text-align:center;font-size:12px;line-height:14px;color:#dedede">0</div>
<div class="t" style="left:1234.7px;top:683px;width:60px;text-align:center;font-size:12px;line-height:14px;color:#dedede">10</div>
<div class="t" style="left:1293.0px;top:683px;width:60px;text-align:center;font-size:12px;line-height:14px;color:#dedede">20</div>
<div class="t" style="left:1351.3px;top:683px;width:60px;text-align:center;font-size:12px;line-height:14px;color:#dedede">30</div>
<div class="t" style="left:1409.6px;top:683px;width:60px;text-align:center;font-size:12px;line-height:14px;color:#dedede">40</div>
<div class="t" style="left:1467.9px;top:683px;width:60px;text-align:center;font-size:12px;line-height:14px;color:#dedede">50</div>
<div class="t" style="left:1526.2px;top:683px;width:60px;text-align:center;font-size:12px;line-height:14px;color:#dedede">60</div>
<div class="t" style="left:1584.5px;top:683px;width:60px;text-align:center;font-size:12px;line-height:14px;color:#dedede">70</div>
<div class="t" style="left:1642.8px;top:683px;width:60px;text-align:center;font-size:12px;line-height:14px;color:#dedede">80</div>
<div class="t" style="left:1701.1px;top:683px;width:60px;text-align:center;font-size:12px;line-height:14px;color:#dedede">90</div>
<div class="t" style="left:1759.4px;top:683px;width:60px;text-align:center;font-size:12px;line-height:14px;color:#dedede">100</div>
<div class="t" style="left:1817.7px;top:683px;width:60px;text-align:center;font-size:12px;line-height:14px;color:#dedede">110</div>
<div class="t" style="left:1876.0px;top:683px;width:60px;text-align:center;font-size:12px;line-height:14px;color:#dedede">120</div>
<div class="a" style="left:1914px;top:681px;width:6px;height:24px;background:#1f1f1f;"></div>
<div class="a" style="left:1207px;top:705px;width:707px;height:17px;background:#454545;"></div>
<div class="a" style="left:1197px;top:705px;width:10px;height:17px;background:#2a2a2a;"></div>
<div class="a" style="left:1907px;top:705px;width:5px;height:17px;background:#6cc4aa;border-radius:1px"></div>
<div class="a" style="left:1197px;top:724px;width:10px;height:19px;background:#2a2a2a;"></div>
<svg class="a" style="left:1207px;top:724px;" width="707" height="19" viewBox="0 0 707 19"><defs><pattern id="st" patternUnits="userSpaceOnUse" width="35" height="19" patternTransform="skewX(-45)"><rect width="35" height="19" fill="#5a84d6"/><rect x="0" width="17.5" height="19" fill="#6890e8"/><rect x="0" width="1.5" height="19" fill="#7aa6ff"/><rect x="17.5" width="1.5" height="19" fill="#74a0f8"/><rect x="34" width="1" height="19" fill="#4e76c6"/></pattern></defs><rect width="707" height="19" fill="url(#st)"/><rect x="700" width="7" height="19" fill="rgba(0,0,0,0.18)"/></svg>
<div class="t" style="left:1215px;top:726px;font-size:12px;line-height:14px;color:#f4f4f4;font-weight:bold;transform:scaleX(0.9299);transform-origin:0 0">String Manipulator [Cavalry Typing Text 01]</div>
<svg class="a" style="left:1201px;top:749px;" width="12" height="12" viewBox="0 0 12 12"><path d="M6 1 L11 6 L6 11 L1 6z" fill="#8a8a8a"/></svg>
<svg class="a" style="left:1207px;top:768px;" width="707" height="18" viewBox="0 0 707 18"><defs><pattern id="dt" patternUnits="userSpaceOnUse" width="3" height="3"><rect width="3" height="3" fill="#e4cbff"/><circle cx="1.5" cy="1.5" r="1.2" fill="#9a6be4"/></pattern></defs><rect x="0.5" y="0.5" width="707" height="17" rx="3" fill="url(#dt)" stroke="#f4ecff" stroke-width="1"/><rect x="700" width="7" height="18" fill="rgba(0,0,0,0.15)"/></svg>
<div class="t" style="left:1215px;top:770px;font-size:12px;line-height:14px;color:#fff;text-shadow:0 0 0.6px #fff;transform:scaleX(0.9756);transform-origin:0 0">Cavalry Typing Text 01</div>
<div class="a" style="left:1907px;top:705px;width:7px;height:295px;background:rgba(0,0,0,0.12);"></div>
<div class="a" style="left:1206px;top:704px;width:1.2px;height:258px;background:#62ae98;"></div>
<svg class="a" style="left:1199px;top:694px;" width="16" height="11" viewBox="0 0 16 11"><path d="M0.5 0.5 H15 L7.7 10z" fill="#6cc4aa"/></svg>
<div class="a" style="left:1202px;top:704px;width:6px;height:18px;background:#6cc4aa;border-radius:1px"></div>
<div class="a" style="left:1200px;top:962px;width:714px;height:14px;background:#2a2a2a;"></div>
<div class="a" style="left:1215px;top:964px;width:648px;height:10px;background:#474747;border-radius:5px"></div>
<div class="a" style="left:1200px;top:976px;width:714px;height:22px;background:#474747;"></div>
<div class="a" style="left:1204px;top:978px;width:17px;height:18px;background:#2e2e2e;border:1px solid #222;border-radius:4px"></div>
<svg class="a" style="left:1206px;top:981px;" width="14" height="13" viewBox="0 0 14 13"><rect x="1" y="1" width="12" height="1.5" fill="#ddd"/><rect x="1" y="5" width="2" height="1.5" fill="#ddd"/><rect x="5" y="5" width="8" height="1.5" fill="#ddd"/><rect x="1" y="9" width="4" height="1.5" fill="#ddd"/><rect x="8" y="9" width="2" height="1.5" fill="#ddd"/><path d="M12 12.5 l2 -2 v2z" fill="#49c99a"/></svg>
<div class="a" style="left:1224px;top:979px;width:150px;height:16px;background:#2b2b2b;border-radius:3px"></div>
<div class="t" style="left:1226px;top:981px;font-size:12px;line-height:14px;color:#e6e6e6;;transform:scaleX(0.9797);transform-origin:0 0">Default Keyframe Layer</div>
<div class="a" style="left:1380px;top:979px;width:70px;height:16px;background:#2b2b2b;border-radius:3px"></div>
<div class="t" style="left:1385px;top:981px;font-size:12px;line-height:14px;color:#555;">F</div>
<div class="t" style="left:1397px;top:981px;font-size:12px;line-height:14px;color:#ddd;">-</div>
<div class="t" style="left:1456px;top:981px;font-size:12px;line-height:14px;color:#e6e6e6;">Align:</div>
<div class="a" style="left:1493px;top:978px;width:52.5px;height:17px;background:#2b2b2b;border:1px solid #222;border-radius:4px"></div>
<svg class="a" style="left:1493.0px;top:978px;" width="17.5" height="17" viewBox="0 0 17.5 17"><rect x="3" y="2" width="1" height="13" fill="#ddd"/><rect x="5.5" y="5" width="2" height="2" fill="#6cd4b8"/><rect x="8.5" y="5" width="3" height="2" fill="#ddd"/><rect x="5.5" y="10" width="2" height="2" fill="#6cd4b8"/><rect x="8.5" y="10" width="6" height="2" fill="#ddd"/></svg>
<div class="a" style="left:1510.5px;top:979px;width:1px;height:15px;background:#222;"></div>
<svg class="a" style="left:1510.5px;top:978px;" width="17.5" height="17" viewBox="0 0 17.5 17"><rect x="8.2" y="2" width="1" height="13" fill="#ddd"/><rect x="4" y="5" width="2" height="2" fill="#ddd"/><rect x="7.7" y="5" width="2" height="2" fill="#6cd4b8"/><rect x="11" y="5" width="2" height="2" fill="#ddd"/><rect x="3" y="10" width="3" height="2" fill="#ddd"/><rect x="7.7" y="10" width="2" height="2" fill="#6cd4b8"/><rect x="11" y="10" width="3" height="2" fill="#ddd"/></svg>
<div class="a" style="left:1528.0px;top:979px;width:1px;height:15px;background:#222;"></div>
<svg class="a" style="left:1528.0px;top:978px;" width="17.5" height="17" viewBox="0 0 17.5 17"><rect x="14" y="2" width="1" height="13" fill="#ddd"/><rect x="10" y="5" width="2" height="2" fill="#6cd4b8"/><rect x="6" y="5" width="3" height="2" fill="#ddd"/><rect x="10" y="10" width="2" height="2" fill="#6cd4b8"/><rect x="3" y="10" width="6" height="2" fill="#ddd"/></svg>
<div class="a" style="left:1550px;top:978px;width:17px;height:17px;background:#2b2b2b;border:1px solid #222;border-radius:4px"></div>
<svg class="a" style="left:1550px;top:978px;" width="17" height="17" viewBox="0 0 17 17"><rect x="3" y="3" width="11" height="11" fill="none" stroke="#ccc" stroke-width="0.9" stroke-dasharray="2 1.5"/><rect x="7.5" y="7.5" width="2" height="2" fill="#ddd"/></svg>
<div class="a" style="left:1570px;top:978px;width:31px;height:17px;background:#2b2b2b;border:1px solid #222;border-radius:4px"></div>
<div class="a" style="left:1589px;top:979px;width:1px;height:15px;background:#222;"></div>
<svg class="a" style="left:1570px;top:978px;" width="19" height="17" viewBox="0 0 19 17"><path d="M5 11 L4.5 8 A5 5 0 0 1 14 6 L13 8" fill="none" stroke="#ddd" stroke-width="2.2"/></svg>
<svg class="a" style="left:1591px;top:982px;" width="8" height="10" viewBox="0 0 8 10"><path d="M1 1 L6 5 L1 9z" fill="none" stroke="#888" stroke-width="1"/></svg>
<div class="a" style="left:1605px;top:978px;width:31px;height:17px;background:#2b2b2b;border:1px solid #222;border-radius:4px"></div>
<div class="a" style="left:1624px;top:979px;width:1px;height:15px;background:#222;"></div>
<svg class="a" style="left:1605px;top:978px;" width="19" height="17" viewBox="0 0 19 17"><path d="M2 9 H6 M8 4 V15 M10 7 V11 M12 9 H17" stroke="#ddd" stroke-width="1"/></svg>
<svg class="a" style="left:1626px;top:982px;" width="8" height="10" viewBox="0 0 8 10"><path d="M1 1 L6 5 L1 9z" fill="none" stroke="#888" stroke-width="1"/></svg>
<svg class="a" style="left:1743px;top:980px;" width="15" height="15" viewBox="0 0 15 15"><circle cx="6" cy="6" r="5.2" fill="none" stroke="#ccc" stroke-width="1"/><path d="M3.5 6 H8.5" stroke="#ccc" stroke-width="1"/><path d="M10 10 L13.5 13.5" stroke="#ccc" stroke-width="1.8"/></svg>
<div class="a" style="left:1762px;top:985px;width:120px;height:4px;background:#555;border-radius:2px"></div>
<div class="a" style="left:1762px;top:985px;width:62px;height:4px;background:#e0e0e0;border-radius:2px"></div>
<svg class="a" style="left:1818px;top:981px;" width="12" height="12" viewBox="0 0 12 12"><circle cx="6" cy="6" r="5.5" fill="#6fcfb2"/><circle cx="6" cy="6" r="2" fill="#4a9e86"/></svg>
<svg class="a" style="left:1886px;top:980px;" width="15" height="15" viewBox="0 0 15 15"><circle cx="6" cy="6" r="5.2" fill="none" stroke="#ccc" stroke-width="1"/><path d="M3.5 6 H8.5 M6 3.5 V8.5" stroke="#ccc" stroke-width="1"/><path d="M10 10 L13.5 13.5" stroke="#ccc" stroke-width="1.8"/></svg>
<div class="a" style="left:494px;top:998px;width:1420px;height:6px;background:#121212;"></div>
<div class="a" style="left:494px;top:1004px;width:1420px;height:22px;background:#3a3a3a;"></div>
<div class="a" style="left:494px;top:1026px;width:1420px;height:4px;background:#262626;"></div>
<div class="a" style="left:498px;top:1010px;width:2px;height:2px;background:#888;"></div>
<div class="a" style="left:498px;top:1014px;width:2px;height:2px;background:#888;"></div>
<div class="a" style="left:498px;top:1018px;width:2px;height:2px;background:#888;"></div>
<div class="a" style="left:508px;top:1006px;width:16px;height:18px;background:#1f1f1f;border-radius:3px"></div>
<svg class="a" style="left:509px;top:1008px;" width="14" height="14" viewBox="0 0 14 14"><path d="M1 1 H13 V9 H7 L5 12 V9 H1z" fill="#eee"/><rect x="3" y="3" width="8" height="1" fill="#333"/><rect x="3" y="5" width="8" height="1" fill="#333"/><rect x="3" y="7" width="8" height="1" fill="#333"/></svg>
<div class="a" style="left:528px;top:1008px;width:18px;height:14px;background:#d87474;border-radius:2px"></div>
<div class="t" style="left:533px;top:1010px;font-size:11px;line-height:13px;color:#3a0d0d;">5</div>
<svg class="a" style="left:554px;top:1012px;" width="7" height="7" viewBox="0 0 7 7"><circle cx="3.5" cy="3.5" r="3" fill="#d87474"/></svg>
<div class="t" style="left:565px;top:1009px;font-size:12px;line-height:14px;color:#e6e6e6;;transform:scaleX(0.9552);transform-origin:0 0">Save reminder: 99 minutes since your last save.</div>
<div class="t" style="left:1361px;top:1009px;font-size:11.5px;line-height:13px;color:#dcdcdc;font-style:italic;transform:scaleX(0.8940);transform-origin:0 0">Click to see next message</div>
<div class="a" style="left:1488px;top:1006px;width:80px;height:18px;background:#d4bf74;border-radius:2px"></div>
<div class="t" style="left:1494px;top:1009px;font-size:12px;line-height:14px;color:#2a2a2a;;transform:scaleX(0.9298);transform-origin:0 0">Feedback</div>
<svg class="a" style="left:1548px;top:1007px;" width="16" height="16" viewBox="0 0 16 16"><rect x="3" y="2" width="10" height="12" fill="#f2f2f2" stroke="#5fd35f" stroke-width="0.8"/><path d="M6 12 L12 5" stroke="#f07030" stroke-width="2.5"/></svg>
<div class="a" style="left:1571px;top:1006px;width:109px;height:18px;background:#2ecc71;border-radius:2px"></div>
<div class="t" style="left:1577px;top:1009px;font-size:12px;line-height:14px;color:#1b1b3a;;transform:scaleX(0.9707);transform-origin:0 0">Upgrade to Pro</div>
<svg class="a" style="left:1660px;top:1007px;" width="16" height="16" viewBox="0 0 16 16"><ellipse cx="5" cy="10" rx="3.5" ry="4" fill="#f5c030"/><ellipse cx="11" cy="10" rx="3.5" ry="4" fill="#f5c030"/></svg>
<div class="a" style="left:1683px;top:1006px;width:119px;height:18px;background:#c49cf5;border-radius:2px"></div>
<div class="t" style="left:1689px;top:1009px;font-size:12px;line-height:14px;color:#3a2a4a;;transform:scaleX(0.9795);transform-origin:0 0">Update Available</div>
<svg class="a" style="left:1782px;top:1007px;" width="16" height="16" viewBox="0 0 16 16"><circle cx="8" cy="9" r="6" fill="#f5b030"/><path d="M3 4 L8 1 L10 6z" fill="#7a50c0"/><circle cx="12" cy="11" r="2" fill="#3a9"/></svg>
<div class="a" style="left:1805px;top:1006px;width:106px;height:18px;background:#3eaaee;border-radius:2px"></div>
<div class="t" style="left:1811px;top:1009px;font-size:12px;line-height:14px;color:#1b1b3a;;transform:scaleX(0.9471);transform-origin:0 0">Tips and Tricks</div>
<svg class="a" style="left:1891px;top:1007px;" width="16" height="16" viewBox="0 0 16 16"><path d="M3 13 L5 9 L11 3 Q14 2 13 5 L7 11z" fill="#eee"/><circle cx="10" cy="6" r="1.2" fill="#39f"/><path d="M3 13 L2 10 L5 9z M3 13 L6 14 L7 11z" fill="#e33"/></svg>
<div class="a" style="left:461px;top:532px;width:39px;height:16px;background:#1e1e1e;border:1px solid #161616"></div>
<div class="t" style="left:463px;top:534px;font-size:12px;line-height:14px;color:#e6e6e6;;transform:scaleX(0.9536);transform-origin:0 0">Length</div>
<div class="a" style="left:0px;top:42px;width:6px;height:988px;background:#1e1e1e;"></div>
<div class="a" style="left:1914px;top:42px;width:6px;height:988px;background:#1f1f1f;"></div>
<div class="a" style="left:6px;top:1026px;width:1908px;height:4px;background:#1f1f1f;"></div></body></html>
